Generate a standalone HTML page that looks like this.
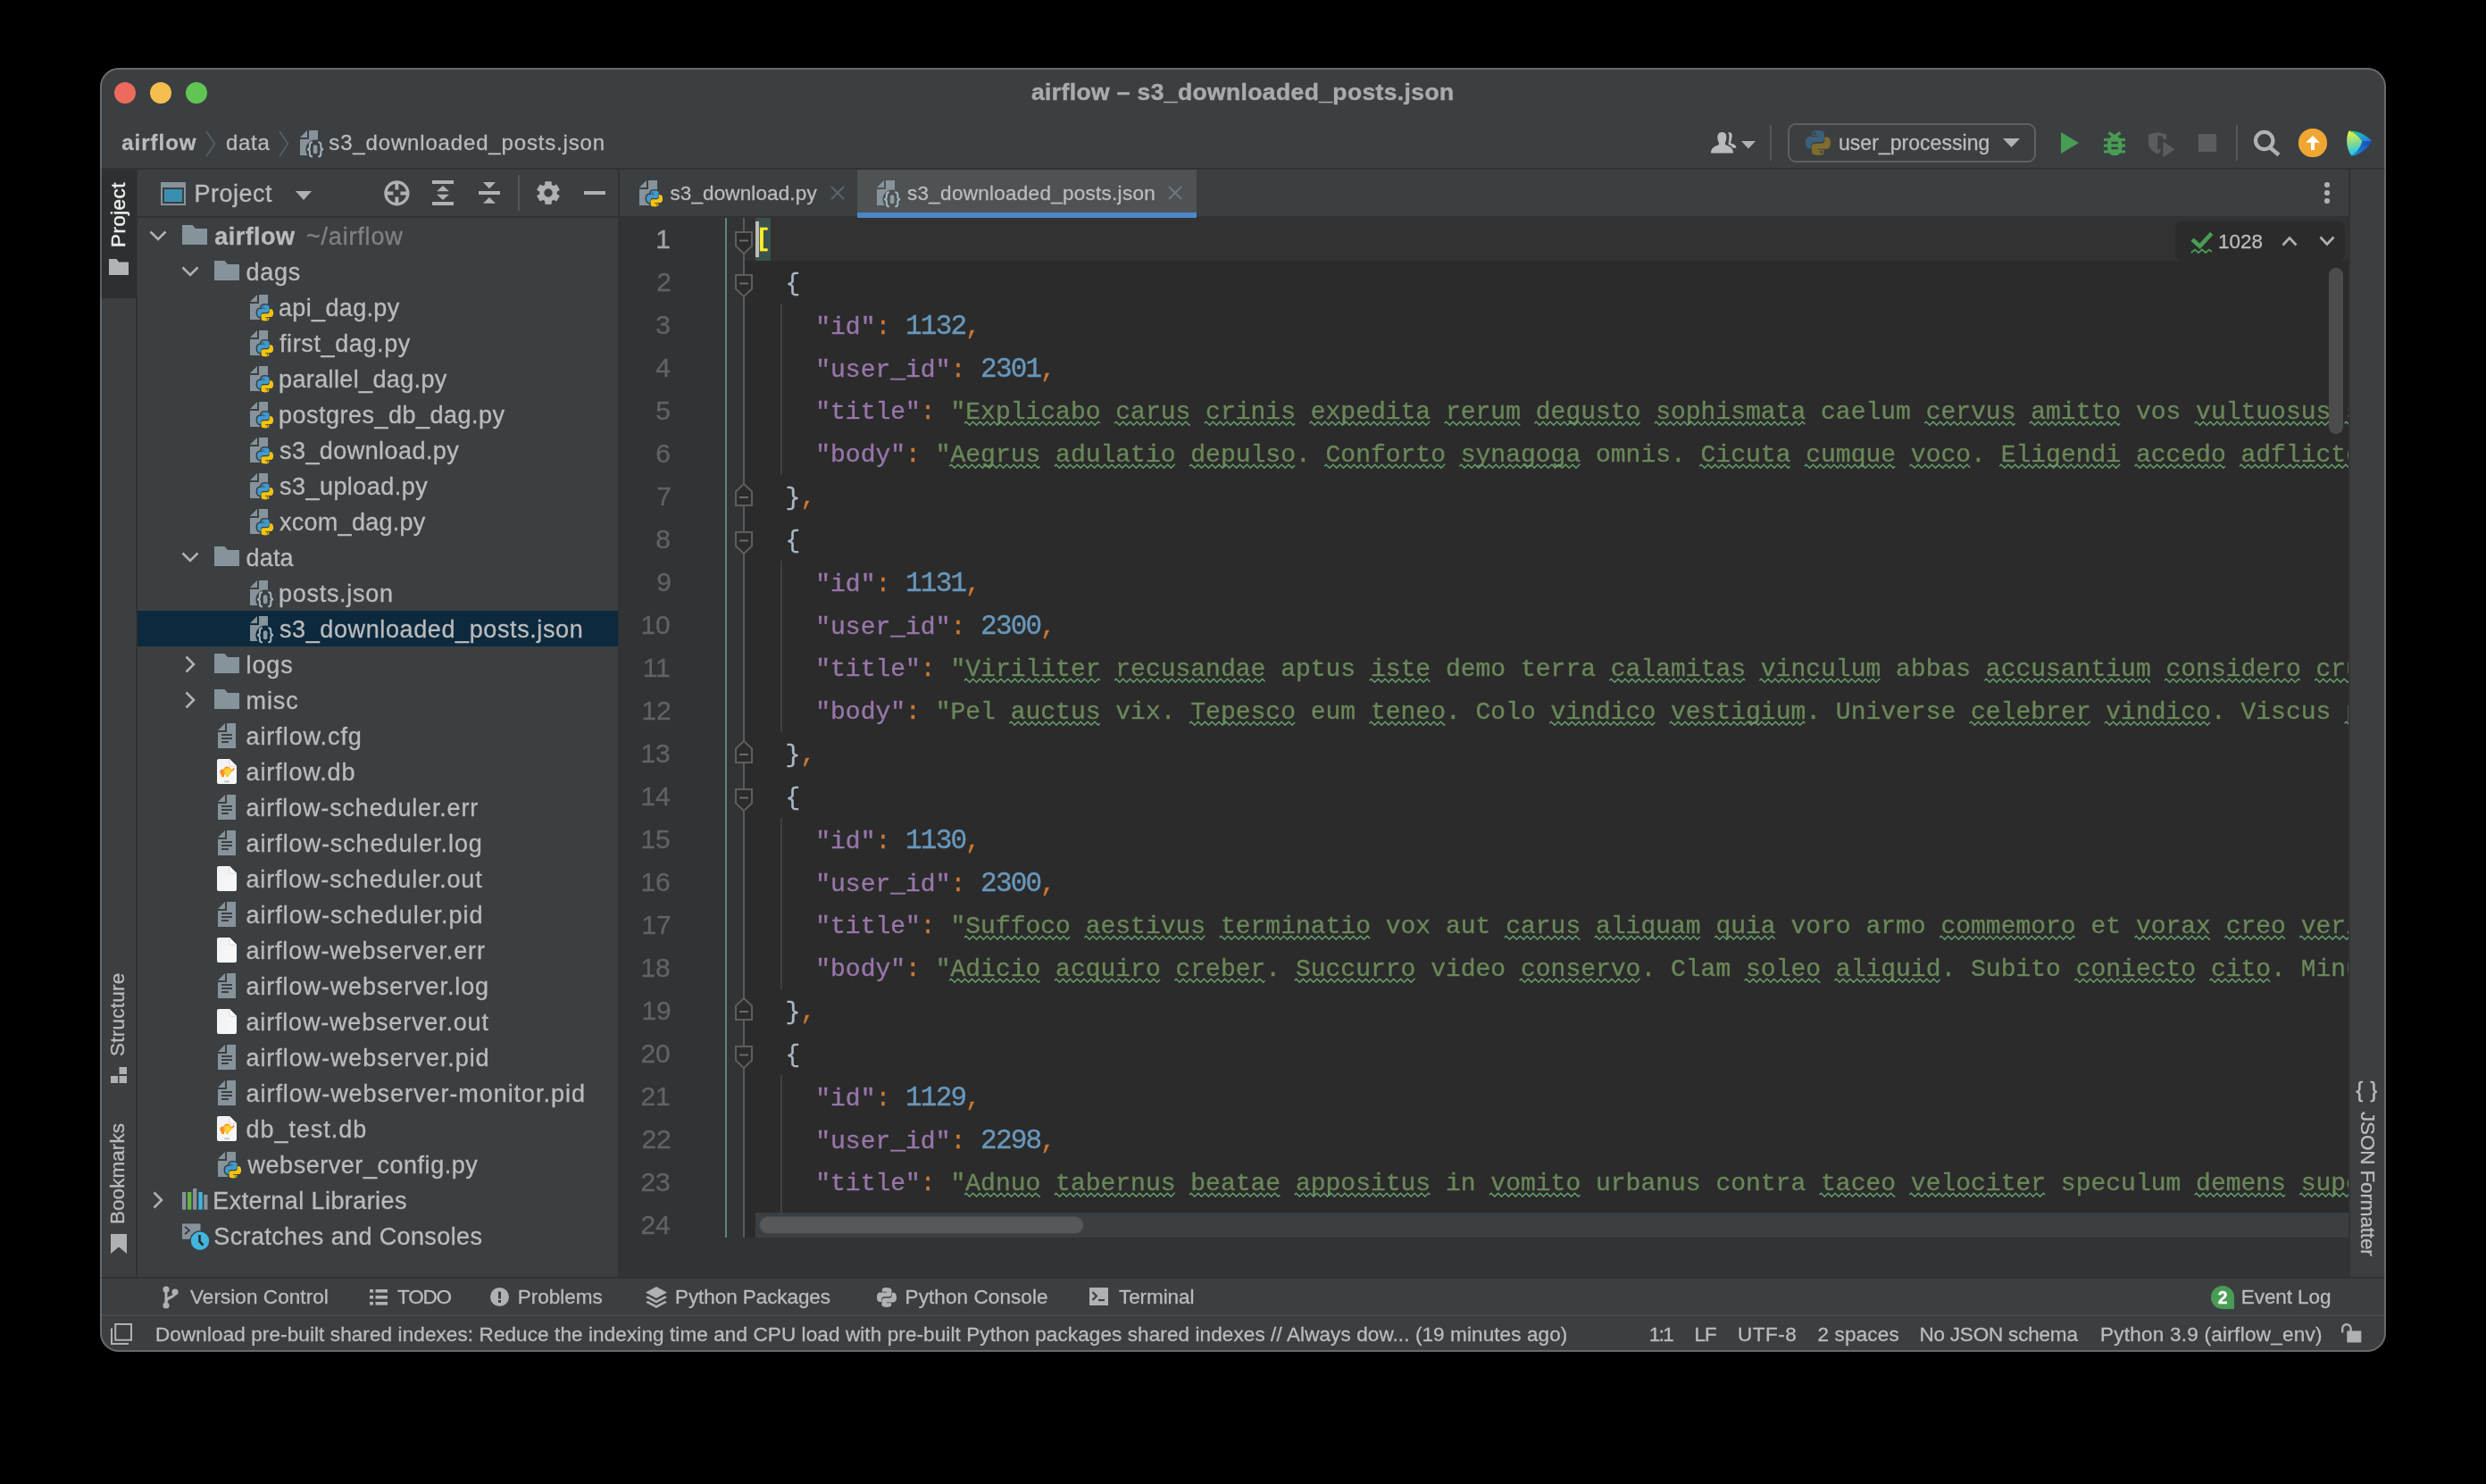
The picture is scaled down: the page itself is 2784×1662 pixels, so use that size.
<!DOCTYPE html>
<html><head><meta charset="utf-8"><title>airflow – s3_downloaded_posts.json</title><style>
html,body{margin:0;padding:0;background:#000;}
body{width:2784px;height:1662px;overflow:hidden;position:relative;font-family:"Liberation Sans", sans-serif;}
#w{will-change:transform;position:absolute;left:0;top:0;width:2784px;height:1662px;clip-path:inset(76px 112px 148px 112px round 21px);background:#3c3f41;}
#w>div,#w>svg,#w>span,#w>pre{position:absolute;}
.t{line-height:1;white-space:pre;}
#bd{position:absolute;left:112px;top:76px;width:2560px;height:1438px;border-radius:21px;box-sizing:border-box;border:2px solid rgba(140,140,140,.55);pointer-events:none;}

.code{position:absolute;left:846px;font-family:"Liberation Mono",monospace;font-size:28px;line-height:48px;height:48px;white-space:pre;margin:0;color:#a9b7c6;-webkit-text-stroke:0.35px currentColor;}
.t{-webkit-text-stroke:0.3px currentColor}
.k{color:#9876aa}.p{color:#cc7832}.n{color:#6897bb;font-size:31px;letter-spacing:-1.8px}.s{color:#6a8759}


</style></head><body>
<svg width="0" height="0" style="position:absolute"><defs>
<symbol id="folder" viewBox="0 0 28 22"><path d="M0,0H11.5L15,4H28V22H0Z" fill="#87939a"/></symbol>
<symbol id="page" viewBox="0 0 20 28"><path d="M10,0H20V28H0V10H10Z" fill="#87939a"/><path d="M0,8L8,0V8Z" fill="#87939a"/></symbol>
<symbol id="pyfile" viewBox="0 0 28 32"><mask id="mpy" maskUnits="userSpaceOnUse" x="0" y="0" width="28" height="32"><rect width="28" height="32" fill="#fff"/><g transform="translate(8.1,11.6) scale(.9)" stroke="#000" stroke-width="3.6" stroke-linejoin="round" fill="#000"><path d="M9.9,0C5,0 5.3,2.1 5.3,2.1V4.3H10V5H3.4C3.4,5 0,4.6 0,9.7C0,14.8 3,14.6 3,14.6H4.7V12.2C4.7,12.2 4.6,9.3 7.6,9.3H12.3C12.3,9.3 15,9.35 15,6.6V2.7C15,2.7 15.4,0 9.9,0Z"/><path d="M10.1,19.9C15,19.9 14.7,17.8 14.7,17.8V15.6H10V14.9H16.6C16.6,14.9 20,15.3 20,10.2C20,5.1 17,5.3 17,5.3H15.3V7.7C15.3,7.7 15.4,10.6 12.4,10.6H7.7C7.7,10.6 5,10.55 5,13.3V17.2C5,17.2 4.6,19.9 10.1,19.9Z"/></g></mask><g mask="url(#mpy)"><use href="#page" x="0" y="0" width="20" height="28"/></g><g transform="translate(8.1,11.6) scale(.9)"><path d="M9.9,0C5,0 5.3,2.1 5.3,2.1V4.3H10V5H3.4C3.4,5 0,4.6 0,9.7C0,14.8 3,14.6 3,14.6H4.7V12.2C4.7,12.2 4.6,9.3 7.6,9.3H12.3C12.3,9.3 15,9.35 15,6.6V2.7C15,2.7 15.4,0 9.9,0Z" fill="#409ace"/><path d="M10.1,19.9C15,19.9 14.7,17.8 14.7,17.8V15.6H10V14.9H16.6C16.6,14.9 20,15.3 20,10.2C20,5.1 17,5.3 17,5.3H15.3V7.7C15.3,7.7 15.4,10.6 12.4,10.6H7.7C7.7,10.6 5,10.55 5,13.3V17.2C5,17.2 4.6,19.9 10.1,19.9Z" fill="#f2c30f"/><circle cx="7.3" cy="2.5" r="1" fill="#2d5f80"/><circle cx="12.7" cy="17.4" r="1" fill="#7d640a"/></g></symbol>
<symbol id="jsonfile" viewBox="0 0 28 32"><mask id="mjs" maskUnits="userSpaceOnUse" x="0" y="0" width="28" height="32"><rect width="28" height="32" fill="#fff"/><circle cx="17.1" cy="21.2" r="10.700" fill="#000"/></mask><g mask="url(#mjs)"><use href="#page" x="0" y="0" width="20" height="28"/></g>
 <g fill="none" stroke="#a4b4bf" stroke-width="2"><path d="M13.900,13.300C11.300,13.300 10.900,14.300 10.900,16.200V18.600C10.900,20.200 10.200,21.100 8.200,21.300C10.200,21.500 10.900,22.400 10.900,24V26.400C10.900,28.300 11.300,29.300 13.900,29.300"/><path d="M20.300,13.300C22.900,13.300 23.300,14.300 23.300,16.200V18.600C23.300,20.200 24,21.100 26,21.300C24,21.500 23.300,22.400 23.300,24V26.400C23.300,28.300 22.900,29.300 20.300,29.300"/></g><rect x="14.800" y="16.300" width="4.600" height="10" rx="2" fill="#8c9aa3"/></symbol>
<symbol id="txtfile" viewBox="0 0 20 28"><use href="#page" width="20" height="28"/><g fill="#3c3f41"><rect x="4" y="12" width="12" height="2"/><rect x="4" y="16" width="12" height="2"/><rect x="4" y="20" width="8" height="2"/></g></symbol>
<symbol id="blank" viewBox="0 0 22 28"><defs><linearGradient id="gbl" x1="0" y1="0" x2="1" y2="1"><stop offset="0" stop-color="#f1f1f1"/><stop offset="1" stop-color="#f8f8f8"/></linearGradient></defs><path d="M2,0H14L22,8V26Q22,28 20,28H2Q0,28 0,26V2Q0,0 2,0Z" fill="url(#gbl)"/><path d="M14,0L22,8H15.500Q14,8 14,6.500Z" fill="#fdfdfd"/><path d="M13.800,0.500V6.500Q13.800,8.200 15.500,8.200H21.500" fill="none" stroke="#c9c9c9" stroke-width="0.700"/></symbol>
<symbol id="dbfile" viewBox="0 0 22 28"><defs><radialGradient id="gel" cx="0.550" cy="0.600" r="0.700"><stop offset="0" stop-color="#ffe03a"/><stop offset="0.600" stop-color="#fdc02c"/><stop offset="1" stop-color="#f9962a"/></radialGradient></defs><use href="#blank" width="22" height="28"/><path d="M15.300,12.300C16.800,13.500 18,12.600 18.800,10.900" fill="none" stroke="#f98d22" stroke-width="1.700" stroke-linecap="round"/><rect x="4.900" y="16.500" width="3.200" height="3.800" rx="1.400" fill="#fa8a1e"/><rect x="10" y="16.500" width="3.200" height="3.800" rx="1.400" fill="#fdc92f"/><circle cx="6.600" cy="14.800" r="3.300" fill="#f98f22"/><circle cx="7.500" cy="13.500" r="1.200" fill="#f2622a"/><ellipse cx="11.700" cy="13.300" rx="4.700" ry="4.500" fill="url(#gel)"/><path d="M8.300,10.300C9.500,8.600 12,8.300 13.500,9.200C11.500,9.200 9.800,9.800 8.300,10.300Z" fill="#f2622a"/><rect x="8.200" y="24" width="5.800" height="2.600" rx="0.500" fill="#cfcfcf"/></symbol>
<symbol id="chev-d" viewBox="0 0 20 12"><path d="M1.5,1.5L10,10L18.5,1.5" fill="none" stroke="#afb1b3" stroke-width="2.6"/></symbol>
<symbol id="chev-r" viewBox="0 0 12 20"><path d="M1.5,1.5L10,10L1.5,18.5" fill="none" stroke="#afb1b3" stroke-width="2.6"/></symbol>
<symbol id="fold-open" viewBox="0 0 20 26"><path d="M1,1H19V16.5L10,25L1,16.5Z" fill="#2b2b2b" stroke="#5e5e5e" stroke-width="2"/><rect x="5" y="9.5" width="10" height="2" fill="#6a6a6a"/></symbol>
<symbol id="fold-close" viewBox="0 0 20 26"><path d="M1,25H19V9.5L10,1L1,9.5Z" fill="#2b2b2b" stroke="#5e5e5e" stroke-width="2"/><rect x="5" y="15" width="10" height="2" fill="#6a6a6a"/></symbol>
</defs></svg>
<div id="w">
<div style="left:128px;top:92px;width:24px;height:24px;background:#ec6a5e;border-radius:50%"></div>
<div style="left:168px;top:92px;width:24px;height:24px;background:#f4bf4f;border-radius:50%"></div>
<div style="left:208px;top:92px;width:24px;height:24px;background:#61c554;border-radius:50%"></div>
<svg style="left:229.5px;top:146px;" width="12" height="30" viewBox="0 0 12 30"><path d="M1,1L10.5,15L1,29" fill="none" stroke="#5a6064" stroke-width="1.6"/></svg>
<svg style="left:311.5px;top:146px;" width="12" height="30" viewBox="0 0 12 30"><path d="M1,1L10.5,15L1,29" fill="none" stroke="#5a6064" stroke-width="1.6"/></svg>
<svg style="left:336px;top:146px;" width="28" height="32" viewBox="0 0 28 32"><use href="#jsonfile" width="28" height="32"/></svg>
<div style="left:112px;top:188px;width:2560px;height:2px;background:#323232;"></div>
<div style="left:112px;top:190px;width:40px;height:1240px;background:#3c3f41;"></div>
<div style="left:112px;top:190px;width:40px;height:144px;background:#2d2f30;"></div>
<div style="left:152px;top:190px;width:2px;height:1240px;background:#323232;"></div>
<span class="t" id="v10" style="left:133px;top:277px;font-size:22.5px;color:#ececec;-webkit-text-stroke:0.45px #ececec;transform-origin:0 0;transform:rotate(-90deg) translateY(-50%);letter-spacing:0.4px">Project</span>
<span class="t" id="v11" style="left:132px;top:1183px;font-size:22.5px;color:#bbbbbb;transform-origin:0 0;transform:rotate(-90deg) translateY(-50%);letter-spacing:0.25px">Structure</span>
<span class="t" id="v12" style="left:132px;top:1370.5px;font-size:22.5px;color:#bbbbbb;transform-origin:0 0;transform:rotate(-90deg) translateY(-50%);letter-spacing:0.05px">Bookmarks</span>
<svg style="left:122px;top:290px;" width="22" height="18" viewBox="0 0 22 18"><path d="M0,0H8.5L11,3.500H22V18H0Z" fill="#b2b3b4"/></svg>
<svg style="left:124px;top:1195px;" width="18" height="18" viewBox="0 0 18 18"><rect x="9.5" y="0" width="8.5" height="8" fill="#afb1b3"/><rect x="0" y="10" width="8" height="8" fill="#afb1b3"/><rect x="9.5" y="10" width="8.5" height="8" fill="#afb1b3"/></svg>
<svg style="left:124px;top:1382px;" width="18" height="22" viewBox="0 0 18 22"><path d="M0,0H18V22L9,14.5L0,22Z" fill="#afb1b3"/></svg>
<div style="left:154px;top:242px;width:538px;height:2px;background:#323232;"></div>
<div style="left:692px;top:190px;width:2px;height:1240px;background:#323232;"></div>
<svg style="left:180px;top:204px;" width="28" height="26" viewBox="0 0 28 26"><rect x="0" y="0" width="28" height="26" fill="#87939a"/><rect x="2" y="6" width="24" height="18" fill="#3c3f41"/><rect x="4" y="8" width="20" height="14" fill="#3a8fb0"/></svg>
<svg style="left:331px;top:213.5px;" width="18" height="10" viewBox="0 0 18 10"><path d="M0,0H18L9,10Z" fill="#afb1b3"/></svg>
<svg style="left:429.5px;top:201.5px;" width="29" height="29" viewBox="0 0 29 29"><circle cx="14.400" cy="14.400" r="12.400" fill="none" stroke="#afb1b3" stroke-width="3.400"/><path d="M14.400,2V10.400M14.400,18.400V27M2,14.400H10.400M18.400,14.400H27" stroke="#afb1b3" stroke-width="4"/></svg>
<svg style="left:484px;top:202px;" width="24.2" height="28" viewBox="0 0 24.2 28"><rect x="0" y="0" width="24.200" height="4" fill="#afb1b3"/><rect x="0" y="24" width="24.200" height="4" fill="#afb1b3"/><path d="M12,6L19,12.200H5Z M12,22L19,15.800H5Z" fill="#afb1b3"/></svg>
<svg style="left:536px;top:203px;" width="24.2" height="26" viewBox="0 0 24.2 26"><rect x="0" y="11" width="24.200" height="4" fill="#afb1b3"/><path d="M12,8.200L19,1H5Z M12,18L19,24.800H5Z" fill="#afb1b3"/></svg>
<div style="left:580px;top:196px;width:2px;height:40px;background:#555759;"></div>
<svg style="left:600px;top:202px;" width="28" height="28" viewBox="0 0 28 28"><path d="M10.94,1.78L17.06,1.78L17.24,5.39L19.84,6.89L23.06,5.24L26.11,10.53L23.08,12.50L23.08,15.50L26.11,17.47L23.06,22.76L19.84,21.11L17.24,22.61L17.06,26.22L10.94,26.22L10.76,22.61L8.16,21.11L4.94,22.76L1.89,17.47L4.92,15.50L4.92,12.50L1.89,10.53L4.94,5.24L8.16,6.89L10.76,5.39ZM19.3,14A5.3,5.3 0 1,0 8.7,14A5.3,5.3 0 1,0 19.3,14Z" fill="#afb1b3" fill-rule="evenodd" stroke="#afb1b3" stroke-width="1.2" stroke-linejoin="round"/></svg>
<div style="left:653.8px;top:214px;width:24.4px;height:4px;background:#afb1b3;"></div>
<svg style="left:167px;top:257.5px;" width="20" height="12" viewBox="0 0 20 12"><use href="#chev-d" width="20" height="12"/></svg>
<svg style="left:204px;top:252px;" width="28" height="22" viewBox="0 0 28 22"><use href="#folder" width="28" height="22"/></svg>
<svg style="left:203px;top:297.5px;" width="20" height="12" viewBox="0 0 20 12"><use href="#chev-d" width="20" height="12"/></svg>
<svg style="left:240px;top:292px;" width="28" height="22" viewBox="0 0 28 22"><use href="#folder" width="28" height="22"/></svg>
<svg style="left:280px;top:330px;" width="28" height="32" viewBox="0 0 28 32"><use href="#pyfile" width="28" height="32"/></svg>
<svg style="left:280px;top:370px;" width="28" height="32" viewBox="0 0 28 32"><use href="#pyfile" width="28" height="32"/></svg>
<svg style="left:280px;top:410px;" width="28" height="32" viewBox="0 0 28 32"><use href="#pyfile" width="28" height="32"/></svg>
<svg style="left:280px;top:450px;" width="28" height="32" viewBox="0 0 28 32"><use href="#pyfile" width="28" height="32"/></svg>
<svg style="left:280px;top:490px;" width="28" height="32" viewBox="0 0 28 32"><use href="#pyfile" width="28" height="32"/></svg>
<svg style="left:280px;top:530px;" width="28" height="32" viewBox="0 0 28 32"><use href="#pyfile" width="28" height="32"/></svg>
<svg style="left:280px;top:570px;" width="28" height="32" viewBox="0 0 28 32"><use href="#pyfile" width="28" height="32"/></svg>
<svg style="left:203px;top:617.5px;" width="20" height="12" viewBox="0 0 20 12"><use href="#chev-d" width="20" height="12"/></svg>
<svg style="left:240px;top:612px;" width="28" height="22" viewBox="0 0 28 22"><use href="#folder" width="28" height="22"/></svg>
<svg style="left:280px;top:650px;" width="28" height="32" viewBox="0 0 28 32"><use href="#jsonfile" width="28" height="32"/></svg>
<div style="left:154px;top:684px;width:538px;height:40px;background:#0d293e;"></div>
<svg style="left:280px;top:690px;" width="28" height="32" viewBox="0 0 28 32"><use href="#jsonfile" width="28" height="32"/></svg>
<svg style="left:206.5px;top:734px;" width="12" height="20" viewBox="0 0 12 20"><use href="#chev-r" width="12" height="20"/></svg>
<svg style="left:240px;top:732px;" width="28" height="22" viewBox="0 0 28 22"><use href="#folder" width="28" height="22"/></svg>
<svg style="left:206.5px;top:774px;" width="12" height="20" viewBox="0 0 12 20"><use href="#chev-r" width="12" height="20"/></svg>
<svg style="left:240px;top:772px;" width="28" height="22" viewBox="0 0 28 22"><use href="#folder" width="28" height="22"/></svg>
<svg style="left:244px;top:810px;" width="20" height="28" viewBox="0 0 20 28"><use href="#txtfile" width="20" height="28"/></svg>
<svg style="left:243px;top:850px;" width="22" height="28" viewBox="0 0 22 28"><use href="#dbfile" width="22" height="28"/></svg>
<svg style="left:244px;top:890px;" width="20" height="28" viewBox="0 0 20 28"><use href="#txtfile" width="20" height="28"/></svg>
<svg style="left:244px;top:930px;" width="20" height="28" viewBox="0 0 20 28"><use href="#txtfile" width="20" height="28"/></svg>
<svg style="left:243px;top:970px;" width="22" height="28" viewBox="0 0 22 28"><use href="#blank" width="22" height="28"/></svg>
<svg style="left:244px;top:1010px;" width="20" height="28" viewBox="0 0 20 28"><use href="#txtfile" width="20" height="28"/></svg>
<svg style="left:243px;top:1050px;" width="22" height="28" viewBox="0 0 22 28"><use href="#blank" width="22" height="28"/></svg>
<svg style="left:244px;top:1090px;" width="20" height="28" viewBox="0 0 20 28"><use href="#txtfile" width="20" height="28"/></svg>
<svg style="left:243px;top:1130px;" width="22" height="28" viewBox="0 0 22 28"><use href="#blank" width="22" height="28"/></svg>
<svg style="left:244px;top:1170px;" width="20" height="28" viewBox="0 0 20 28"><use href="#txtfile" width="20" height="28"/></svg>
<svg style="left:244px;top:1210px;" width="20" height="28" viewBox="0 0 20 28"><use href="#txtfile" width="20" height="28"/></svg>
<svg style="left:243px;top:1250px;" width="22" height="28" viewBox="0 0 22 28"><use href="#dbfile" width="22" height="28"/></svg>
<svg style="left:244px;top:1290px;" width="28" height="32" viewBox="0 0 28 32"><use href="#pyfile" width="28" height="32"/></svg>
<svg style="left:170.5px;top:1334px;" width="12" height="20" viewBox="0 0 12 20"><use href="#chev-r" width="12" height="20"/></svg>
<svg style="left:204px;top:1330.5px;" width="29" height="24" viewBox="0 0 29 24"><rect x="0" y="4" width="4.300" height="19.700" fill="#87939a"/><rect x="6" y="4" width="4.300" height="19.700" fill="#62b543"/><rect x="12" y="0" width="4.300" height="23.700" fill="#87939a"/><rect x="18.400" y="4" width="4.300" height="19.700" fill="#40b6e0"/><rect x="24.300" y="7" width="4.200" height="16.700" fill="#87939a"/></svg>
<svg style="left:204px;top:1369px;" width="32" height="32" viewBox="0 0 32 32"><path d="M0,1.400H20.500V9A11.800,11.800 0 0,0 8.500,18.800H0Z" fill="#87939a"/><path d="M3,4.800L8,9L3,13.200" fill="none" stroke="#3c3f41" stroke-width="2"/><circle cx="20" cy="20.800" r="10.200" fill="#40b6e0"/><path d="M19.500,14V21.500L23.500,25.500" fill="none" stroke="#2b2b2b" stroke-width="2.600"/></svg>
<svg style="left:1915.8px;top:147.7px;" width="29" height="24" viewBox="0 0 29 24"><path d="M21,0.300C24.300,0.300 24,5 23,8.500C22.500,10.500 21.800,11.500 22.300,12.300C24,13.500 28.400,13.500 28.400,17.800H24.500C23.500,15.500 21,14.500 19.300,13.800C19.800,11 20.800,7 20.300,3.500C20.100,2 19.600,1 19,0.600C19.600,0.400 20.300,0.300 21,0.300Z" fill="#b9babb"/><path d="M12.400,0C17.500,0 18,4.500 17,9C16.500,11.500 15.500,12.500 16,13.800C18,15.500 25,15.800 25,23.400H0C0,15.800 7.500,15.500 9,13.800C9.500,12.500 8.300,11.500 7.800,9C6.800,4.500 7.400,0 12.400,0Z" fill="#b9babb" stroke="#3c3f41" stroke-width="0"/></svg>
<svg style="left:1950px;top:157.7px;" width="16" height="8.5" viewBox="0 0 16 8.5"><path d="M0,0H16L8,8.500Z" fill="#afb1b3"/></svg>
<div style="left:1982px;top:140px;width:2px;height:40px;background:#555759;"></div>
<div style="left:2002px;top:138px;width:278px;height:44px;background:transparent;border:2.300px solid #5e6163;border-radius:9px;box-sizing:border-box"></div>
<svg style="left:2022px;top:146px;" width="28" height="28" viewBox="0 0 20 20"><path d="M9.9,0C5,0 5.3,2.1 5.3,2.1V4.3H10V5H3.4C3.4,5 0,4.6 0,9.7C0,14.8 3,14.6 3,14.6H4.7V12.2C4.7,12.2 4.6,9.3 7.6,9.3H12.3C12.3,9.3 15,9.35 15,6.6V2.7C15,2.7 15.4,0 9.9,0Z" fill="#3b6079"/><path d="M10.1,19.9C15,19.9 14.7,17.8 14.7,17.8V15.6H10V14.9H16.6C16.6,14.9 20,15.3 20,10.2C20,5.1 17,5.3 17,5.3H15.3V7.7C15.3,7.7 15.4,10.6 12.4,10.6H7.7C7.7,10.6 5,10.55 5,13.3V17.2C5,17.2 4.6,19.9 10.1,19.9Z" fill="#7d6d2f"/><circle cx="7.300" cy="2.500" r="1" fill="#3c3f41"/><circle cx="12.700" cy="17.400" r="1" fill="#3c3f41"/></svg>
<svg style="left:2243px;top:155px;" width="19" height="10" viewBox="0 0 19 10"><path d="M0,0H19L9.500,10Z" fill="#afb1b3"/></svg>
<svg style="left:2308px;top:148px;" width="20" height="24" viewBox="0 0 20 24"><path d="M0,0L20,12L0,24Z" fill="#499c54"/></svg>
<svg style="left:2356px;top:145.5px;" width="24.4" height="28.6" viewBox="0 0 24.4 28.6"><g fill="#499c54"><path d="M5.500,2.500L11.800,7.200L18.500,2.500" fill="none" stroke="#499c54" stroke-width="3.400"/><ellipse cx="12.200" cy="17.300" rx="8.500" ry="11.300"/><rect x="0" y="8.900" width="24.400" height="3"/><rect x="0" y="15.600" width="24.400" height="3"/><rect x="0" y="22.400" width="24.400" height="3"/></g><rect x="8.400" y="12.700" width="7.500" height="2.500" fill="#3c3f41"/><rect x="8.400" y="18.700" width="7.500" height="2.500" fill="#3c3f41"/></svg>
<svg style="left:2405.8px;top:147.5px;" width="30" height="29" viewBox="0 0 30 29"><path d="M0,2.600L10,0L20.200,2.600V8H16V4.800L10.300,4V20.500L13.500,17.500V22C12.500,23 11.300,23.700 10,24.300C4,21.500 0,17.500 0,11.500Z" fill="#5a5c5e"/><path d="M16.300,10.500L29.500,19.200L16.300,28Z" fill="#5a5c5e"/></svg>
<div style="left:2462px;top:150px;width:20px;height:20px;background:#5a5c5e;"></div>
<div style="left:2504px;top:140px;width:2px;height:40px;background:#555759;"></div>
<svg style="left:2522px;top:144px;" width="32" height="32" viewBox="0 0 32 32"><circle cx="13.700" cy="13.500" r="9.700" fill="none" stroke="#afb1b3" stroke-width="4.200"/><path d="M20.200,21.200L30,29.500" stroke="#afb1b3" stroke-width="4.400"/></svg>
<svg style="left:2574px;top:144px;" width="32" height="32" viewBox="0 0 32 32"><circle cx="16" cy="16" r="16.100" fill="#f0a732"/><path d="M16,8L23.800,15.700H18V24H14V15.700H8.200Z" fill="#fff"/></svg>
<svg style="left:2627.8px;top:145.6px;" width="29" height="29" viewBox="0 0 29 29"><defs><linearGradient id="ga" x1="0" y1="0" x2="0.150" y2="1"><stop offset="0" stop-color="#f8f53a"/><stop offset=".5" stop-color="#8fdb8a"/><stop offset="1" stop-color="#1fc3f0"/></linearGradient><linearGradient id="gb" x1="0" y1="0" x2="1" y2="0.600"><stop offset="0" stop-color="#2bd17a"/><stop offset=".5" stop-color="#22b3b8"/><stop offset="1" stop-color="#1b86e8"/></linearGradient><linearGradient id="gc" x1="1" y1="0" x2="0" y2="1"><stop offset="0" stop-color="#1d49b0"/><stop offset=".6" stop-color="#1673d3"/><stop offset="1" stop-color="#0ab0f0"/></linearGradient></defs><path d="M2.500,0.500C-1,8 -1,20 5.400,28.500C12,24 16,18.500 17.400,12.300C14,6.500 9,2.500 2.500,0.500Z" fill="url(#ga)"/><path d="M2.500,0.500C13,0.300 22,5 28.200,12.300H17.400C14,6.500 9,2.500 2.500,0.500Z" fill="url(#gb)"/><path d="M17.400,12.300H28.200C24,20 15,27 5.400,28.500C12,24 16,18.500 17.400,12.300Z" fill="url(#gc)"/></svg>
<div style="left:694px;top:190px;width:1936px;height:52px;background:#3c3f41;"></div>
<div style="left:694px;top:242px;width:1936px;height:2px;background:#323232;"></div>
<svg style="left:716px;top:202px;" width="28" height="32" viewBox="0 0 28 32"><use href="#pyfile" width="28" height="32"/></svg>
<svg style="left:930px;top:208px;" width="16" height="16" viewBox="0 0 16 16"><path d="M1,1L15,15M15,1L1,15" stroke="#5d656a" stroke-width="2"/></svg>
<div style="left:960px;top:190px;width:380px;height:54px;background:#4e5254;"></div>
<div style="left:960px;top:238px;width:380px;height:6px;background:#4a88c7;"></div>
<svg style="left:982px;top:202px;" width="28" height="32" viewBox="0 0 28 32"><use href="#jsonfile" width="28" height="32"/></svg>
<svg style="left:1308px;top:208px;" width="16" height="16" viewBox="0 0 16 16"><path d="M1,1L15,15M15,1L1,15" stroke="#6e767b" stroke-width="2"/></svg>
<div style="left:2603px;top:204.2px;width:5.6px;height:5.6px;background:#afb1b3;border-radius:50%"></div>
<div style="left:2603px;top:213.2px;width:5.6px;height:5.6px;background:#afb1b3;border-radius:50%"></div>
<div style="left:2603px;top:222.2px;width:5.6px;height:5.6px;background:#afb1b3;border-radius:50%"></div>
<div style="left:2630px;top:190px;width:42px;height:1240px;background:#3c3f41;"></div>
<div style="left:2630px;top:190px;width:1.6px;height:1240px;background:#323232;"></div>
<span class="t" style="left:2651px;top:1245px;font-size:22.5px;color:#bbbbbb;transform-origin:0 0;transform:rotate(90deg) translateY(-50%);letter-spacing:-0.15px">JSON Formatter</span>
<div style="left:694px;top:244px;width:1936px;height:1142px;background:#2b2b2b;"></div>
<div style="left:694px;top:244px;width:140px;height:1186px;background:#313335;"></div>
<div style="left:834px;top:244px;width:1796px;height:48px;background:#323232;"></div>
<div style="left:694px;top:1386px;width:1936px;height:44px;background:#313335;"></div>
<div style="left:812px;top:244px;width:2px;height:1142px;background:#57877b;"></div>
<div style="left:832px;top:244px;width:2px;height:1142px;background:#5b5b5b;"></div>
<div style="left:874.3px;top:340px;width:1.6px;height:192px;background:#414141;"></div>
<div style="left:874.3px;top:628px;width:1.6px;height:192px;background:#414141;"></div>
<div style="left:874.3px;top:916px;width:1.6px;height:192px;background:#414141;"></div>
<div style="left:874.3px;top:1204px;width:1.6px;height:154px;background:#414141;"></div>
<svg style="left:823px;top:259px;" width="20" height="26" viewBox="0 0 20 26"><use href="#fold-open" width="20" height="26"/></svg>
<svg style="left:823px;top:307px;" width="20" height="26" viewBox="0 0 20 26"><use href="#fold-open" width="20" height="26"/></svg>
<svg style="left:823px;top:595px;" width="20" height="26" viewBox="0 0 20 26"><use href="#fold-open" width="20" height="26"/></svg>
<svg style="left:823px;top:883px;" width="20" height="26" viewBox="0 0 20 26"><use href="#fold-open" width="20" height="26"/></svg>
<svg style="left:823px;top:1171px;" width="20" height="26" viewBox="0 0 20 26"><use href="#fold-open" width="20" height="26"/></svg>
<svg style="left:823px;top:541px;" width="20" height="26" viewBox="0 0 20 26"><use href="#fold-close" width="20" height="26"/></svg>
<svg style="left:823px;top:829px;" width="20" height="26" viewBox="0 0 20 26"><use href="#fold-close" width="20" height="26"/></svg>
<svg style="left:823px;top:1117px;" width="20" height="26" viewBox="0 0 20 26"><use href="#fold-close" width="20" height="26"/></svg>
<div style="left:846px;top:244px;width:16.8px;height:48px;background:#3b514d;"></div>
<div style="left:846px;top:248px;width:4px;height:40px;background:#bbbbbb;"></div>
<div style="left:0;top:0;width:2630px;height:1386px;overflow:hidden"><pre class="code" style="top:246.3px"><b style="color:#ffef28;position:relative;top:-2.5px">[</b></pre><pre class="code" style="top:294.3px">  {</pre><pre class="code" style="top:342.3px">    <span class="k">&quot;id&quot;</span><span class="p">:</span> <span class="n">1132</span><span class="p">,</span></pre><pre class="code" style="top:390.3px">    <span class="k">&quot;user_id&quot;</span><span class="p">:</span> <span class="n">2301</span><span class="p">,</span></pre><pre class="code" style="top:438.3px">    <span class="k">&quot;title&quot;</span><span class="p">:</span> <span class="s">&quot;Explicabo carus crinis expedita rerum degusto sophismata caelum cervus amitto vos vultuosus succurro vox</span></pre><pre class="code" style="top:486.3px">    <span class="k">&quot;body&quot;</span><span class="p">:</span> <span class="s">&quot;Aegrus adulatio depulso. Conforto synagoga omnis. Cicuta cumque voco. Eligendi accedo adflicto. Vox</span></pre><pre class="code" style="top:534.3px">  }<span class="p">,</span></pre><pre class="code" style="top:582.3px">  {</pre><pre class="code" style="top:630.3px">    <span class="k">&quot;id&quot;</span><span class="p">:</span> <span class="n">1131</span><span class="p">,</span></pre><pre class="code" style="top:678.3px">    <span class="k">&quot;user_id&quot;</span><span class="p">:</span> <span class="n">2300</span><span class="p">,</span></pre><pre class="code" style="top:726.3px">    <span class="k">&quot;title&quot;</span><span class="p">:</span> <span class="s">&quot;Viriliter recusandae aptus iste demo terra calamitas vinculum abbas accusantium considero crux vox</span></pre><pre class="code" style="top:774.3px">    <span class="k">&quot;body&quot;</span><span class="p">:</span> <span class="s">&quot;Pel auctus vix. Tepesco eum teneo. Colo vindico vestigium. Universe celebrer vindico. Viscus pecto vox</span></pre><pre class="code" style="top:822.3px">  }<span class="p">,</span></pre><pre class="code" style="top:870.3px">  {</pre><pre class="code" style="top:918.3px">    <span class="k">&quot;id&quot;</span><span class="p">:</span> <span class="n">1130</span><span class="p">,</span></pre><pre class="code" style="top:966.3px">    <span class="k">&quot;user_id&quot;</span><span class="p">:</span> <span class="n">2300</span><span class="p">,</span></pre><pre class="code" style="top:1014.3px">    <span class="k">&quot;title&quot;</span><span class="p">:</span> <span class="s">&quot;Suffoco aestivus terminatio vox aut carus aliquam quia voro armo commemoro et vorax creo veritas vox</span></pre><pre class="code" style="top:1062.3px">    <span class="k">&quot;body&quot;</span><span class="p">:</span> <span class="s">&quot;Adicio acquiro creber. Succurro video conservo. Clam soleo aliquid. Subito coniecto cito. Minus vox</span></pre><pre class="code" style="top:1110.3px">  }<span class="p">,</span></pre><pre class="code" style="top:1158.3px">  {</pre><pre class="code" style="top:1206.3px">    <span class="k">&quot;id&quot;</span><span class="p">:</span> <span class="n">1129</span><span class="p">,</span></pre><pre class="code" style="top:1254.3px">    <span class="k">&quot;user_id&quot;</span><span class="p">:</span> <span class="n">2298</span><span class="p">,</span></pre><pre class="code" style="top:1302.3px">    <span class="k">&quot;title&quot;</span><span class="p">:</span> <span class="s">&quot;Adnuo tabernus beatae appositus in vomito urbanus contra taceo velociter speculum demens supellex vox</span></pre><svg style="position:absolute;left:0;top:0" width="2630" height="1386"><path d="M1080.0,474.2L1081.9,472.3L1085.8,476.1L1089.7,472.3L1093.6,476.1L1097.5,472.3L1101.4,476.1L1105.3,472.3L1109.2,476.1L1113.1,472.3L1117.0,476.1L1120.9,472.3L1124.8,476.1L1128.7,472.3L1132.6,476.1L1136.5,472.3L1140.4,476.1L1144.3,472.3L1148.2,476.1L1152.1,472.3L1156.0,476.1L1159.9,472.3L1163.8,476.1L1167.7,472.3L1171.6,476.1L1175.5,472.3L1179.4,476.1L1183.3,472.3L1187.2,476.1L1191.1,472.3L1195.0,476.1L1198.9,472.3L1202.8,476.1L1206.7,472.3L1210.6,476.1L1214.5,472.3L1218.4,476.1L1222.3,472.3L1226.2,476.1L1230.1,472.3L1231.8,474.0M1248.0,474.2L1249.9,472.3L1253.8,476.1L1257.7,472.3L1261.6,476.1L1265.5,472.3L1269.4,476.1L1273.3,472.3L1277.2,476.1L1281.1,472.3L1285.0,476.1L1288.9,472.3L1292.8,476.1L1296.7,472.3L1300.6,476.1L1304.5,472.3L1308.4,476.1L1312.3,472.3L1316.2,476.1L1320.1,472.3L1324.0,476.1L1327.9,472.3L1331.8,476.1L1332.6,475.3M1348.8,474.2L1350.7,472.3L1354.6,476.1L1358.5,472.3L1362.4,476.1L1366.3,472.3L1370.2,476.1L1374.1,472.3L1378.0,476.1L1381.9,472.3L1385.8,476.1L1389.7,472.3L1393.6,476.1L1397.5,472.3L1401.4,476.1L1405.3,472.3L1409.2,476.1L1413.1,472.3L1417.0,476.1L1420.9,472.3L1424.8,476.1L1428.7,472.3L1432.6,476.1L1436.5,472.3L1440.4,476.1L1444.3,472.3L1448.2,476.1L1450.2,474.2M1466.4,474.2L1468.3,472.3L1472.2,476.1L1476.1,472.3L1480.0,476.1L1483.9,472.3L1487.8,476.1L1491.7,472.3L1495.6,476.1L1499.5,472.3L1503.4,476.1L1507.3,472.3L1511.2,476.1L1515.1,472.3L1519.0,476.1L1522.9,472.3L1526.8,476.1L1530.7,472.3L1534.6,476.1L1538.5,472.3L1542.4,476.1L1546.3,472.3L1550.2,476.1L1554.1,472.3L1558.0,476.1L1561.9,472.3L1565.8,476.1L1569.7,472.3L1573.6,476.1L1577.5,472.3L1581.4,476.1L1585.3,472.3L1589.2,476.1L1593.1,472.3L1597.0,476.1L1600.9,472.3L1601.4,472.8M1617.6,474.2L1619.5,472.3L1623.4,476.1L1627.3,472.3L1631.2,476.1L1635.1,472.3L1639.0,476.1L1642.9,472.3L1646.8,476.1L1650.7,472.3L1654.6,476.1L1658.5,472.3L1662.4,476.1L1666.3,472.3L1670.2,476.1L1674.1,472.3L1678.0,476.1L1681.9,472.3L1685.8,476.1L1689.7,472.3L1693.6,476.1L1697.5,472.3L1701.4,476.1L1702.2,475.3M1718.4,474.2L1720.3,472.3L1724.2,476.1L1728.1,472.3L1732.0,476.1L1735.9,472.3L1739.8,476.1L1743.7,472.3L1747.6,476.1L1751.5,472.3L1755.4,476.1L1759.3,472.3L1763.2,476.1L1767.1,472.3L1771.0,476.1L1774.9,472.3L1778.8,476.1L1782.7,472.3L1786.6,476.1L1790.5,472.3L1794.4,476.1L1798.3,472.3L1802.2,476.1L1806.1,472.3L1810.0,476.1L1813.9,472.3L1817.8,476.1L1821.7,472.3L1825.6,476.1L1829.5,472.3L1833.4,476.1L1836.6,473.0M1852.8,474.2L1854.7,472.3L1858.6,476.1L1862.5,472.3L1866.4,476.1L1870.3,472.3L1874.2,476.1L1878.1,472.3L1882.0,476.1L1885.9,472.3L1889.8,476.1L1893.7,472.3L1897.6,476.1L1901.5,472.3L1905.4,476.1L1909.3,472.3L1913.2,476.1L1917.1,472.3L1921.0,476.1L1924.9,472.3L1928.8,476.1L1932.7,472.3L1936.6,476.1L1940.5,472.3L1944.4,476.1L1948.3,472.3L1952.2,476.1L1956.1,472.3L1960.0,476.1L1963.9,472.3L1967.8,476.1L1971.7,472.3L1975.6,476.1L1979.5,472.3L1983.4,476.1L1987.3,472.3L1991.2,476.1L1995.1,472.3L1999.0,476.1L2002.9,472.3L2006.8,476.1L2010.7,472.3L2014.6,476.1L2018.5,472.3L2021.4,475.1M2155.2,474.2L2157.1,472.3L2161.0,476.1L2164.9,472.3L2168.8,476.1L2172.7,472.3L2176.6,476.1L2180.5,472.3L2184.4,476.1L2188.3,472.3L2192.2,476.1L2196.1,472.3L2200.0,476.1L2203.9,472.3L2207.8,476.1L2211.7,472.3L2215.6,476.1L2219.5,472.3L2223.4,476.1L2227.3,472.3L2231.2,476.1L2235.1,472.3L2239.0,476.1L2242.9,472.3L2246.8,476.1L2250.7,472.3L2254.6,476.1L2256.6,474.2M2272.8,474.2L2274.7,472.3L2278.6,476.1L2282.5,472.3L2286.4,476.1L2290.3,472.3L2294.2,476.1L2298.1,472.3L2302.0,476.1L2305.9,472.3L2309.8,476.1L2313.7,472.3L2317.6,476.1L2321.5,472.3L2325.4,476.1L2329.3,472.3L2333.2,476.1L2337.1,472.3L2341.0,476.1L2344.9,472.3L2348.8,476.1L2352.7,472.3L2356.6,476.1L2360.5,472.3L2364.4,476.1L2368.3,472.3L2372.2,476.1L2374.2,474.2M2457.6,474.2L2459.5,472.3L2463.4,476.1L2467.3,472.3L2471.2,476.1L2475.1,472.3L2479.0,476.1L2482.9,472.3L2486.8,476.1L2490.7,472.3L2494.6,476.1L2498.5,472.3L2502.4,476.1L2506.3,472.3L2510.2,476.1L2514.1,472.3L2518.0,476.1L2521.9,472.3L2525.8,476.1L2529.7,472.3L2533.6,476.1L2537.5,472.3L2541.4,476.1L2545.3,472.3L2549.2,476.1L2553.1,472.3L2557.0,476.1L2560.9,472.3L2564.8,476.1L2568.7,472.3L2572.6,476.1L2576.5,472.3L2580.4,476.1L2584.3,472.3L2588.2,476.1L2592.1,472.3L2596.0,476.1L2599.9,472.3L2603.8,476.1L2607.7,472.3L2609.4,474.0M2625.6,474.2L2627.5,472.3L2631.4,476.1L2635.3,472.3L2639.2,476.1L2643.1,472.3L2647.0,476.1L2650.9,472.3L2654.8,476.1L2658.7,472.3L2662.6,476.1L2666.5,472.3L2670.4,476.1L2674.3,472.3L2678.2,476.1L2682.1,472.3L2686.0,476.1L2689.9,472.3L2693.8,476.1L2697.7,472.3L2701.6,476.1L2705.5,472.3L2709.4,476.1L2713.3,472.3L2717.2,476.1L2721.1,472.3L2725.0,476.1L2728.9,472.3L2732.8,476.1L2736.7,472.3L2740.6,476.1L2744.5,472.3L2748.4,476.1L2752.3,472.3L2756.2,476.1L2760.1,472.3L2760.6,472.8M1063.2,522.2L1065.1,520.3L1069.0,524.1L1072.9,520.3L1076.8,524.1L1080.7,520.3L1084.6,524.1L1088.5,520.3L1092.4,524.1L1096.3,520.3L1100.2,524.1L1104.1,520.3L1108.0,524.1L1111.9,520.3L1115.8,524.1L1119.7,520.3L1123.6,524.1L1127.5,520.3L1131.4,524.1L1135.3,520.3L1139.2,524.1L1143.1,520.3L1147.0,524.1L1150.9,520.3L1154.8,524.1L1158.7,520.3L1162.6,524.1L1164.6,522.2M1180.8,522.2L1182.7,520.3L1186.6,524.1L1190.5,520.3L1194.4,524.1L1198.3,520.3L1202.2,524.1L1206.1,520.3L1210.0,524.1L1213.9,520.3L1217.8,524.1L1221.7,520.3L1225.6,524.1L1229.5,520.3L1233.4,524.1L1237.3,520.3L1241.2,524.1L1245.1,520.3L1249.0,524.1L1252.9,520.3L1256.8,524.1L1260.7,520.3L1264.6,524.1L1268.5,520.3L1272.4,524.1L1276.3,520.3L1280.2,524.1L1284.1,520.3L1288.0,524.1L1291.9,520.3L1295.8,524.1L1299.7,520.3L1303.6,524.1L1307.5,520.3L1311.4,524.1L1315.3,520.3L1315.8,520.8M1332.0,522.2L1333.9,520.3L1337.8,524.1L1341.7,520.3L1345.6,524.1L1349.5,520.3L1353.4,524.1L1357.3,520.3L1361.2,524.1L1365.1,520.3L1369.0,524.1L1372.9,520.3L1376.8,524.1L1380.7,520.3L1384.6,524.1L1388.5,520.3L1392.4,524.1L1396.3,520.3L1400.2,524.1L1404.1,520.3L1408.0,524.1L1411.9,520.3L1415.8,524.1L1419.7,520.3L1423.6,524.1L1427.5,520.3L1431.4,524.1L1435.3,520.3L1439.2,524.1L1443.1,520.3L1447.0,524.1L1450.2,521.0M1483.2,522.2L1485.1,520.3L1489.0,524.1L1492.9,520.3L1496.8,524.1L1500.7,520.3L1504.6,524.1L1508.5,520.3L1512.4,524.1L1516.3,520.3L1520.2,524.1L1524.1,520.3L1528.0,524.1L1531.9,520.3L1535.8,524.1L1539.7,520.3L1543.6,524.1L1547.5,520.3L1551.4,524.1L1555.3,520.3L1559.2,524.1L1563.1,520.3L1567.0,524.1L1570.9,520.3L1574.8,524.1L1578.7,520.3L1582.6,524.1L1586.5,520.3L1590.4,524.1L1594.3,520.3L1598.2,524.1L1602.1,520.3L1606.0,524.1L1609.9,520.3L1613.8,524.1L1617.7,520.3L1618.2,520.8M1634.4,522.2L1636.3,520.3L1640.2,524.1L1644.1,520.3L1648.0,524.1L1651.9,520.3L1655.8,524.1L1659.7,520.3L1663.6,524.1L1667.5,520.3L1671.4,524.1L1675.3,520.3L1679.2,524.1L1683.1,520.3L1687.0,524.1L1690.9,520.3L1694.8,524.1L1698.7,520.3L1702.6,524.1L1706.5,520.3L1710.4,524.1L1714.3,520.3L1718.2,524.1L1722.1,520.3L1726.0,524.1L1729.9,520.3L1733.8,524.1L1737.7,520.3L1741.6,524.1L1745.5,520.3L1749.4,524.1L1753.3,520.3L1757.2,524.1L1761.1,520.3L1765.0,524.1L1768.9,520.3L1769.4,520.8M1903.2,522.2L1905.1,520.3L1909.0,524.1L1912.9,520.3L1916.8,524.1L1920.7,520.3L1924.6,524.1L1928.5,520.3L1932.4,524.1L1936.3,520.3L1940.2,524.1L1944.1,520.3L1948.0,524.1L1951.9,520.3L1955.8,524.1L1959.7,520.3L1963.6,524.1L1967.5,520.3L1971.4,524.1L1975.3,520.3L1979.2,524.1L1983.1,520.3L1987.0,524.1L1990.9,520.3L1994.8,524.1L1998.7,520.3L2002.6,524.1L2004.6,522.2M2020.8,522.2L2022.7,520.3L2026.6,524.1L2030.5,520.3L2034.4,524.1L2038.3,520.3L2042.2,524.1L2046.1,520.3L2050.0,524.1L2053.9,520.3L2057.8,524.1L2061.7,520.3L2065.6,524.1L2069.5,520.3L2073.4,524.1L2077.3,520.3L2081.2,524.1L2085.1,520.3L2089.0,524.1L2092.9,520.3L2096.8,524.1L2100.7,520.3L2104.6,524.1L2108.5,520.3L2112.4,524.1L2116.3,520.3L2120.2,524.1L2122.2,522.2M2138.4,522.2L2140.3,520.3L2144.2,524.1L2148.1,520.3L2152.0,524.1L2155.9,520.3L2159.8,524.1L2163.7,520.3L2167.6,524.1L2171.5,520.3L2175.4,524.1L2179.3,520.3L2183.2,524.1L2187.1,520.3L2191.0,524.1L2194.9,520.3L2198.8,524.1L2202.7,520.3L2206.2,523.7M2239.2,522.2L2241.1,520.3L2245.0,524.1L2248.9,520.3L2252.8,524.1L2256.7,520.3L2260.6,524.1L2264.5,520.3L2268.4,524.1L2272.3,520.3L2276.2,524.1L2280.1,520.3L2284.0,524.1L2287.9,520.3L2291.8,524.1L2295.7,520.3L2299.6,524.1L2303.5,520.3L2307.4,524.1L2311.3,520.3L2315.2,524.1L2319.1,520.3L2323.0,524.1L2326.9,520.3L2330.8,524.1L2334.7,520.3L2338.6,524.1L2342.5,520.3L2346.4,524.1L2350.3,520.3L2354.2,524.1L2358.1,520.3L2362.0,524.1L2365.9,520.3L2369.8,524.1L2373.7,520.3L2374.2,520.8M2390.4,522.2L2392.3,520.3L2396.2,524.1L2400.1,520.3L2404.0,524.1L2407.9,520.3L2411.8,524.1L2415.7,520.3L2419.6,524.1L2423.5,520.3L2427.4,524.1L2431.3,520.3L2435.2,524.1L2439.1,520.3L2443.0,524.1L2446.9,520.3L2450.8,524.1L2454.7,520.3L2458.6,524.1L2462.5,520.3L2466.4,524.1L2470.3,520.3L2474.2,524.1L2478.1,520.3L2482.0,524.1L2485.9,520.3L2489.8,524.1L2491.8,522.2M2508.0,522.2L2509.9,520.3L2513.8,524.1L2517.7,520.3L2521.6,524.1L2525.5,520.3L2529.4,524.1L2533.3,520.3L2537.2,524.1L2541.1,520.3L2545.0,524.1L2548.9,520.3L2552.8,524.1L2556.7,520.3L2560.6,524.1L2564.5,520.3L2568.4,524.1L2572.3,520.3L2576.2,524.1L2580.1,520.3L2584.0,524.1L2587.9,520.3L2591.8,524.1L2595.7,520.3L2599.6,524.1L2603.5,520.3L2607.4,524.1L2611.3,520.3L2615.2,524.1L2619.1,520.3L2623.0,524.1L2626.9,520.3L2630.8,524.1L2634.7,520.3L2638.6,524.1L2642.5,520.3L2643.0,520.8M1080.0,762.2L1081.9,760.3L1085.8,764.1L1089.7,760.3L1093.6,764.1L1097.5,760.3L1101.4,764.1L1105.3,760.3L1109.2,764.1L1113.1,760.3L1117.0,764.1L1120.9,760.3L1124.8,764.1L1128.7,760.3L1132.6,764.1L1136.5,760.3L1140.4,764.1L1144.3,760.3L1148.2,764.1L1152.1,760.3L1156.0,764.1L1159.9,760.3L1163.8,764.1L1167.7,760.3L1171.6,764.1L1175.5,760.3L1179.4,764.1L1183.3,760.3L1187.2,764.1L1191.1,760.3L1195.0,764.1L1198.9,760.3L1202.8,764.1L1206.7,760.3L1210.6,764.1L1214.5,760.3L1218.4,764.1L1222.3,760.3L1226.2,764.1L1230.1,760.3L1231.8,762.0M1248.0,762.2L1249.9,760.3L1253.8,764.1L1257.7,760.3L1261.6,764.1L1265.5,760.3L1269.4,764.1L1273.3,760.3L1277.2,764.1L1281.1,760.3L1285.0,764.1L1288.9,760.3L1292.8,764.1L1296.7,760.3L1300.6,764.1L1304.5,760.3L1308.4,764.1L1312.3,760.3L1316.2,764.1L1320.1,760.3L1324.0,764.1L1327.9,760.3L1331.8,764.1L1335.7,760.3L1339.6,764.1L1343.5,760.3L1347.4,764.1L1351.3,760.3L1355.2,764.1L1359.1,760.3L1363.0,764.1L1366.9,760.3L1370.8,764.1L1374.7,760.3L1378.6,764.1L1382.5,760.3L1386.4,764.1L1390.3,760.3L1394.2,764.1L1398.1,760.3L1402.0,764.1L1405.9,760.3L1409.8,764.1L1413.7,760.3L1416.6,763.1M1533.6,762.2L1535.5,760.3L1539.4,764.1L1543.3,760.3L1547.2,764.1L1551.1,760.3L1555.0,764.1L1558.9,760.3L1562.8,764.1L1566.7,760.3L1570.6,764.1L1574.5,760.3L1578.4,764.1L1582.3,760.3L1586.2,764.1L1590.1,760.3L1594.0,764.1L1597.9,760.3L1601.4,763.7M1802.4,762.2L1804.3,760.3L1808.2,764.1L1812.1,760.3L1816.0,764.1L1819.9,760.3L1823.8,764.1L1827.7,760.3L1831.6,764.1L1835.5,760.3L1839.4,764.1L1843.3,760.3L1847.2,764.1L1851.1,760.3L1855.0,764.1L1858.9,760.3L1862.8,764.1L1866.7,760.3L1870.6,764.1L1874.5,760.3L1878.4,764.1L1882.3,760.3L1886.2,764.1L1890.1,760.3L1894.0,764.1L1897.9,760.3L1901.8,764.1L1905.7,760.3L1909.6,764.1L1913.5,760.3L1917.4,764.1L1921.3,760.3L1925.2,764.1L1929.1,760.3L1933.0,764.1L1936.9,760.3L1940.8,764.1L1944.7,760.3L1948.6,764.1L1952.5,760.3L1954.2,762.0M1970.4,762.2L1972.3,760.3L1976.2,764.1L1980.1,760.3L1984.0,764.1L1987.9,760.3L1991.8,764.1L1995.7,760.3L1999.6,764.1L2003.5,760.3L2007.4,764.1L2011.3,760.3L2015.2,764.1L2019.1,760.3L2023.0,764.1L2026.9,760.3L2030.8,764.1L2034.7,760.3L2038.6,764.1L2042.5,760.3L2046.4,764.1L2050.3,760.3L2054.2,764.1L2058.1,760.3L2062.0,764.1L2065.9,760.3L2069.8,764.1L2073.7,760.3L2077.6,764.1L2081.5,760.3L2085.4,764.1L2089.3,760.3L2093.2,764.1L2097.1,760.3L2101.0,764.1L2104.9,760.3L2105.4,760.8M2222.4,762.2L2224.3,760.3L2228.2,764.1L2232.1,760.3L2236.0,764.1L2239.9,760.3L2243.8,764.1L2247.7,760.3L2251.6,764.1L2255.5,760.3L2259.4,764.1L2263.3,760.3L2267.2,764.1L2271.1,760.3L2275.0,764.1L2278.9,760.3L2282.8,764.1L2286.7,760.3L2290.6,764.1L2294.5,760.3L2298.4,764.1L2302.3,760.3L2306.2,764.1L2310.1,760.3L2314.0,764.1L2317.9,760.3L2321.8,764.1L2325.7,760.3L2329.6,764.1L2333.5,760.3L2337.4,764.1L2341.3,760.3L2345.2,764.1L2349.1,760.3L2353.0,764.1L2356.9,760.3L2360.8,764.1L2364.7,760.3L2368.6,764.1L2372.5,760.3L2376.4,764.1L2380.3,760.3L2384.2,764.1L2388.1,760.3L2392.0,764.1L2395.9,760.3L2399.8,764.1L2403.7,760.3L2407.6,764.1L2407.8,763.9M2424.0,762.2L2425.9,760.3L2429.8,764.1L2433.7,760.3L2437.6,764.1L2441.5,760.3L2445.4,764.1L2449.3,760.3L2453.2,764.1L2457.1,760.3L2461.0,764.1L2464.9,760.3L2468.8,764.1L2472.7,760.3L2476.6,764.1L2480.5,760.3L2484.4,764.1L2488.3,760.3L2492.2,764.1L2496.1,760.3L2500.0,764.1L2503.9,760.3L2507.8,764.1L2511.7,760.3L2515.6,764.1L2519.5,760.3L2523.4,764.1L2527.3,760.3L2531.2,764.1L2535.1,760.3L2539.0,764.1L2542.9,760.3L2546.8,764.1L2550.7,760.3L2554.6,764.1L2558.5,760.3L2562.4,764.1L2566.3,760.3L2570.2,764.1L2574.1,760.3L2575.8,762.0M2592.0,762.2L2593.9,760.3L2597.8,764.1L2601.7,760.3L2605.6,764.1L2609.5,760.3L2613.4,764.1L2617.3,760.3L2621.2,764.1L2625.1,760.3L2629.0,764.1L2632.9,760.3L2636.8,764.1L2640.7,760.3L2644.6,764.1L2648.5,760.3L2652.4,764.1L2656.3,760.3L2659.8,763.7M1130.4,810.2L1132.3,808.3L1136.2,812.1L1140.1,808.3L1144.0,812.1L1147.9,808.3L1151.8,812.1L1155.7,808.3L1159.6,812.1L1163.5,808.3L1167.4,812.1L1171.3,808.3L1175.2,812.1L1179.1,808.3L1183.0,812.1L1186.9,808.3L1190.8,812.1L1194.7,808.3L1198.6,812.1L1202.5,808.3L1206.4,812.1L1210.3,808.3L1214.2,812.1L1218.1,808.3L1222.0,812.1L1225.9,808.3L1229.8,812.1L1231.8,810.2M1332.0,810.2L1333.9,808.3L1337.8,812.1L1341.7,808.3L1345.6,812.1L1349.5,808.3L1353.4,812.1L1357.3,808.3L1361.2,812.1L1365.1,808.3L1369.0,812.1L1372.9,808.3L1376.8,812.1L1380.7,808.3L1384.6,812.1L1388.5,808.3L1392.4,812.1L1396.3,808.3L1400.2,812.1L1404.1,808.3L1408.0,812.1L1411.9,808.3L1415.8,812.1L1419.7,808.3L1423.6,812.1L1427.5,808.3L1431.4,812.1L1435.3,808.3L1439.2,812.1L1443.1,808.3L1447.0,812.1L1450.2,809.0M1533.6,810.2L1535.5,808.3L1539.4,812.1L1543.3,808.3L1547.2,812.1L1551.1,808.3L1555.0,812.1L1558.9,808.3L1562.8,812.1L1566.7,808.3L1570.6,812.1L1574.5,808.3L1578.4,812.1L1582.3,808.3L1586.2,812.1L1590.1,808.3L1594.0,812.1L1597.9,808.3L1601.8,812.1L1605.7,808.3L1609.6,812.1L1613.5,808.3L1617.4,812.1L1618.2,811.3M1735.2,810.2L1737.1,808.3L1741.0,812.1L1744.9,808.3L1748.8,812.1L1752.7,808.3L1756.6,812.1L1760.5,808.3L1764.4,812.1L1768.3,808.3L1772.2,812.1L1776.1,808.3L1780.0,812.1L1783.9,808.3L1787.8,812.1L1791.7,808.3L1795.6,812.1L1799.5,808.3L1803.4,812.1L1807.3,808.3L1811.2,812.1L1815.1,808.3L1819.0,812.1L1822.9,808.3L1826.8,812.1L1830.7,808.3L1834.6,812.1L1838.5,808.3L1842.4,812.1L1846.3,808.3L1850.2,812.1L1853.4,809.0M1869.6,810.2L1871.5,808.3L1875.4,812.1L1879.3,808.3L1883.2,812.1L1887.1,808.3L1891.0,812.1L1894.9,808.3L1898.8,812.1L1902.7,808.3L1906.6,812.1L1910.5,808.3L1914.4,812.1L1918.3,808.3L1922.2,812.1L1926.1,808.3L1930.0,812.1L1933.9,808.3L1937.8,812.1L1941.7,808.3L1945.6,812.1L1949.5,808.3L1953.4,812.1L1957.3,808.3L1961.2,812.1L1965.1,808.3L1969.0,812.1L1972.9,808.3L1976.8,812.1L1980.7,808.3L1984.6,812.1L1988.5,808.3L1992.4,812.1L1996.3,808.3L2000.2,812.1L2004.1,808.3L2008.0,812.1L2011.9,808.3L2015.8,812.1L2019.7,808.3L2021.4,810.0M2205.6,810.2L2207.5,808.3L2211.4,812.1L2215.3,808.3L2219.2,812.1L2223.1,808.3L2227.0,812.1L2230.9,808.3L2234.8,812.1L2238.7,808.3L2242.6,812.1L2246.5,808.3L2250.4,812.1L2254.3,808.3L2258.2,812.1L2262.1,808.3L2266.0,812.1L2269.9,808.3L2273.8,812.1L2277.7,808.3L2281.6,812.1L2285.5,808.3L2289.4,812.1L2293.3,808.3L2297.2,812.1L2301.1,808.3L2305.0,812.1L2308.9,808.3L2312.8,812.1L2316.7,808.3L2320.6,812.1L2324.5,808.3L2328.4,812.1L2332.3,808.3L2336.2,812.1L2340.1,808.3L2340.6,808.8M2356.8,810.2L2358.7,808.3L2362.6,812.1L2366.5,808.3L2370.4,812.1L2374.3,808.3L2378.2,812.1L2382.1,808.3L2386.0,812.1L2389.9,808.3L2393.8,812.1L2397.7,808.3L2401.6,812.1L2405.5,808.3L2409.4,812.1L2413.3,808.3L2417.2,812.1L2421.1,808.3L2425.0,812.1L2428.9,808.3L2432.8,812.1L2436.7,808.3L2440.6,812.1L2444.5,808.3L2448.4,812.1L2452.3,808.3L2456.2,812.1L2460.1,808.3L2464.0,812.1L2467.9,808.3L2471.8,812.1L2475.0,809.0M2625.6,810.2L2627.5,808.3L2631.4,812.1L2635.3,808.3L2639.2,812.1L2643.1,808.3L2647.0,812.1L2650.9,808.3L2654.8,812.1L2658.7,808.3L2662.6,812.1L2666.5,808.3L2670.4,812.1L2674.3,808.3L2678.2,812.1L2682.1,808.3L2686.0,812.1L2689.9,808.3L2693.8,812.1L2697.7,808.3L2701.6,812.1L2705.5,808.3L2709.4,812.1L2710.2,811.3M1080.0,1050.2L1081.9,1048.3L1085.8,1052.1L1089.7,1048.3L1093.6,1052.1L1097.5,1048.3L1101.4,1052.1L1105.3,1048.3L1109.2,1052.1L1113.1,1048.3L1117.0,1052.1L1120.9,1048.3L1124.8,1052.1L1128.7,1048.3L1132.6,1052.1L1136.5,1048.3L1140.4,1052.1L1144.3,1048.3L1148.2,1052.1L1152.1,1048.3L1156.0,1052.1L1159.9,1048.3L1163.8,1052.1L1167.7,1048.3L1171.6,1052.1L1175.5,1048.3L1179.4,1052.1L1183.3,1048.3L1187.2,1052.1L1191.1,1048.3L1195.0,1052.1L1198.2,1049.0M1214.4,1050.2L1216.3,1048.3L1220.2,1052.1L1224.1,1048.3L1228.0,1052.1L1231.9,1048.3L1235.8,1052.1L1239.7,1048.3L1243.6,1052.1L1247.5,1048.3L1251.4,1052.1L1255.3,1048.3L1259.2,1052.1L1263.1,1048.3L1267.0,1052.1L1270.9,1048.3L1274.8,1052.1L1278.7,1048.3L1282.6,1052.1L1286.5,1048.3L1290.4,1052.1L1294.3,1048.3L1298.2,1052.1L1302.1,1048.3L1306.0,1052.1L1309.9,1048.3L1313.8,1052.1L1317.7,1048.3L1321.6,1052.1L1325.5,1048.3L1329.4,1052.1L1333.3,1048.3L1337.2,1052.1L1341.1,1048.3L1345.0,1052.1L1348.9,1048.3L1349.4,1048.8M1365.6,1050.2L1367.5,1048.3L1371.4,1052.1L1375.3,1048.3L1379.2,1052.1L1383.1,1048.3L1387.0,1052.1L1390.9,1048.3L1394.8,1052.1L1398.7,1048.3L1402.6,1052.1L1406.5,1048.3L1410.4,1052.1L1414.3,1048.3L1418.2,1052.1L1422.1,1048.3L1426.0,1052.1L1429.9,1048.3L1433.8,1052.1L1437.7,1048.3L1441.6,1052.1L1445.5,1048.3L1449.4,1052.1L1453.3,1048.3L1457.2,1052.1L1461.1,1048.3L1465.0,1052.1L1468.9,1048.3L1472.8,1052.1L1476.7,1048.3L1480.6,1052.1L1484.5,1048.3L1488.4,1052.1L1492.3,1048.3L1496.2,1052.1L1500.1,1048.3L1504.0,1052.1L1507.9,1048.3L1511.8,1052.1L1515.7,1048.3L1519.6,1052.1L1523.5,1048.3L1527.4,1052.1L1531.3,1048.3L1534.2,1051.1M1684.8,1050.2L1686.7,1048.3L1690.6,1052.1L1694.5,1048.3L1698.4,1052.1L1702.3,1048.3L1706.2,1052.1L1710.1,1048.3L1714.0,1052.1L1717.9,1048.3L1721.8,1052.1L1725.7,1048.3L1729.6,1052.1L1733.5,1048.3L1737.4,1052.1L1741.3,1048.3L1745.2,1052.1L1749.1,1048.3L1753.0,1052.1L1756.9,1048.3L1760.8,1052.1L1764.7,1048.3L1768.6,1052.1L1769.4,1051.3M1785.6,1050.2L1787.5,1048.3L1791.4,1052.1L1795.3,1048.3L1799.2,1052.1L1803.1,1048.3L1807.0,1052.1L1810.9,1048.3L1814.8,1052.1L1818.7,1048.3L1822.6,1052.1L1826.5,1048.3L1830.4,1052.1L1834.3,1048.3L1838.2,1052.1L1842.1,1048.3L1846.0,1052.1L1849.9,1048.3L1853.8,1052.1L1857.7,1048.3L1861.6,1052.1L1865.5,1048.3L1869.4,1052.1L1873.3,1048.3L1877.2,1052.1L1881.1,1048.3L1885.0,1052.1L1888.9,1048.3L1892.8,1052.1L1896.7,1048.3L1900.6,1052.1L1903.8,1049.0M1920.0,1050.2L1921.9,1048.3L1925.8,1052.1L1929.7,1048.3L1933.6,1052.1L1937.5,1048.3L1941.4,1052.1L1945.3,1048.3L1949.2,1052.1L1953.1,1048.3L1957.0,1052.1L1960.9,1048.3L1964.8,1052.1L1968.7,1048.3L1972.6,1052.1L1976.5,1048.3L1980.4,1052.1L1984.3,1048.3L1987.8,1051.7M2172.0,1050.2L2173.9,1048.3L2177.8,1052.1L2181.7,1048.3L2185.6,1052.1L2189.5,1048.3L2193.4,1052.1L2197.3,1048.3L2201.2,1052.1L2205.1,1048.3L2209.0,1052.1L2212.9,1048.3L2216.8,1052.1L2220.7,1048.3L2224.6,1052.1L2228.5,1048.3L2232.4,1052.1L2236.3,1048.3L2240.2,1052.1L2244.1,1048.3L2248.0,1052.1L2251.9,1048.3L2255.8,1052.1L2259.7,1048.3L2263.6,1052.1L2267.5,1048.3L2271.4,1052.1L2275.3,1048.3L2279.2,1052.1L2283.1,1048.3L2287.0,1052.1L2290.9,1048.3L2294.8,1052.1L2298.7,1048.3L2302.6,1052.1L2306.5,1048.3L2310.4,1052.1L2314.3,1048.3L2318.2,1052.1L2322.1,1048.3L2323.8,1050.0M2390.4,1050.2L2392.3,1048.3L2396.2,1052.1L2400.1,1048.3L2404.0,1052.1L2407.9,1048.3L2411.8,1052.1L2415.7,1048.3L2419.6,1052.1L2423.5,1048.3L2427.4,1052.1L2431.3,1048.3L2435.2,1052.1L2439.1,1048.3L2443.0,1052.1L2446.9,1048.3L2450.8,1052.1L2454.7,1048.3L2458.6,1052.1L2462.5,1048.3L2466.4,1052.1L2470.3,1048.3L2474.2,1052.1L2475.0,1051.3M2491.2,1050.2L2493.1,1048.3L2497.0,1052.1L2500.9,1048.3L2504.8,1052.1L2508.7,1048.3L2512.6,1052.1L2516.5,1048.3L2520.4,1052.1L2524.3,1048.3L2528.2,1052.1L2532.1,1048.3L2536.0,1052.1L2539.9,1048.3L2543.8,1052.1L2547.7,1048.3L2551.6,1052.1L2555.5,1048.3L2559.0,1051.7M2575.2,1050.2L2577.1,1048.3L2581.0,1052.1L2584.9,1048.3L2588.8,1052.1L2592.7,1048.3L2596.6,1052.1L2600.5,1048.3L2604.4,1052.1L2608.3,1048.3L2612.2,1052.1L2616.1,1048.3L2620.0,1052.1L2623.9,1048.3L2627.8,1052.1L2631.7,1048.3L2635.6,1052.1L2639.5,1048.3L2643.4,1052.1L2647.3,1048.3L2651.2,1052.1L2655.1,1048.3L2659.0,1052.1L2662.9,1048.3L2666.8,1052.1L2670.7,1048.3L2674.6,1052.1L2678.5,1048.3L2682.4,1052.1L2686.3,1048.3L2690.2,1052.1L2693.4,1049.0M1063.2,1098.2L1065.1,1096.3L1069.0,1100.1L1072.9,1096.3L1076.8,1100.1L1080.7,1096.3L1084.6,1100.1L1088.5,1096.3L1092.4,1100.1L1096.3,1096.3L1100.2,1100.1L1104.1,1096.3L1108.0,1100.1L1111.9,1096.3L1115.8,1100.1L1119.7,1096.3L1123.6,1100.1L1127.5,1096.3L1131.4,1100.1L1135.3,1096.3L1139.2,1100.1L1143.1,1096.3L1147.0,1100.1L1150.9,1096.3L1154.8,1100.1L1158.7,1096.3L1162.6,1100.1L1164.6,1098.2M1180.8,1098.2L1182.7,1096.3L1186.6,1100.1L1190.5,1096.3L1194.4,1100.1L1198.3,1096.3L1202.2,1100.1L1206.1,1096.3L1210.0,1100.1L1213.9,1096.3L1217.8,1100.1L1221.7,1096.3L1225.6,1100.1L1229.5,1096.3L1233.4,1100.1L1237.3,1096.3L1241.2,1100.1L1245.1,1096.3L1249.0,1100.1L1252.9,1096.3L1256.8,1100.1L1260.7,1096.3L1264.6,1100.1L1268.5,1096.3L1272.4,1100.1L1276.3,1096.3L1280.2,1100.1L1284.1,1096.3L1288.0,1100.1L1291.9,1096.3L1295.8,1100.1L1299.0,1097.0M1315.2,1098.2L1317.1,1096.3L1321.0,1100.1L1324.9,1096.3L1328.8,1100.1L1332.7,1096.3L1336.6,1100.1L1340.5,1096.3L1344.4,1100.1L1348.3,1096.3L1352.2,1100.1L1356.1,1096.3L1360.0,1100.1L1363.9,1096.3L1367.8,1100.1L1371.7,1096.3L1375.6,1100.1L1379.5,1096.3L1383.4,1100.1L1387.3,1096.3L1391.2,1100.1L1395.1,1096.3L1399.0,1100.1L1402.9,1096.3L1406.8,1100.1L1410.7,1096.3L1414.6,1100.1L1416.6,1098.2M1449.6,1098.2L1451.5,1096.3L1455.4,1100.1L1459.3,1096.3L1463.2,1100.1L1467.1,1096.3L1471.0,1100.1L1474.9,1096.3L1478.8,1100.1L1482.7,1096.3L1486.6,1100.1L1490.5,1096.3L1494.4,1100.1L1498.3,1096.3L1502.2,1100.1L1506.1,1096.3L1510.0,1100.1L1513.9,1096.3L1517.8,1100.1L1521.7,1096.3L1525.6,1100.1L1529.5,1096.3L1533.4,1100.1L1537.3,1096.3L1541.2,1100.1L1545.1,1096.3L1549.0,1100.1L1552.9,1096.3L1556.8,1100.1L1560.7,1096.3L1564.6,1100.1L1568.5,1096.3L1572.4,1100.1L1576.3,1096.3L1580.2,1100.1L1584.1,1096.3L1584.6,1096.8M1701.6,1098.2L1703.5,1096.3L1707.4,1100.1L1711.3,1096.3L1715.2,1100.1L1719.1,1096.3L1723.0,1100.1L1726.9,1096.3L1730.8,1100.1L1734.7,1096.3L1738.6,1100.1L1742.5,1096.3L1746.4,1100.1L1750.3,1096.3L1754.2,1100.1L1758.1,1096.3L1762.0,1100.1L1765.9,1096.3L1769.8,1100.1L1773.7,1096.3L1777.6,1100.1L1781.5,1096.3L1785.4,1100.1L1789.3,1096.3L1793.2,1100.1L1797.1,1096.3L1801.0,1100.1L1804.9,1096.3L1808.8,1100.1L1812.7,1096.3L1816.6,1100.1L1820.5,1096.3L1824.4,1100.1L1828.3,1096.3L1832.2,1100.1L1836.1,1096.3L1836.6,1096.8M1953.6,1098.2L1955.5,1096.3L1959.4,1100.1L1963.3,1096.3L1967.2,1100.1L1971.1,1096.3L1975.0,1100.1L1978.9,1096.3L1982.8,1100.1L1986.7,1096.3L1990.6,1100.1L1994.5,1096.3L1998.4,1100.1L2002.3,1096.3L2006.2,1100.1L2010.1,1096.3L2014.0,1100.1L2017.9,1096.3L2021.8,1100.1L2025.7,1096.3L2029.6,1100.1L2033.5,1096.3L2037.4,1100.1L2038.2,1099.3M2054.4,1098.2L2056.3,1096.3L2060.2,1100.1L2064.1,1096.3L2068.0,1100.1L2071.9,1096.3L2075.8,1100.1L2079.7,1096.3L2083.6,1100.1L2087.5,1096.3L2091.4,1100.1L2095.3,1096.3L2099.2,1100.1L2103.1,1096.3L2107.0,1100.1L2110.9,1096.3L2114.8,1100.1L2118.7,1096.3L2122.6,1100.1L2126.5,1096.3L2130.4,1100.1L2134.3,1096.3L2138.2,1100.1L2142.1,1096.3L2146.0,1100.1L2149.9,1096.3L2153.8,1100.1L2157.7,1096.3L2161.6,1100.1L2165.5,1096.3L2169.4,1100.1L2172.6,1097.0M2323.2,1098.2L2325.1,1096.3L2329.0,1100.1L2332.9,1096.3L2336.8,1100.1L2340.7,1096.3L2344.6,1100.1L2348.5,1096.3L2352.4,1100.1L2356.3,1096.3L2360.2,1100.1L2364.1,1096.3L2368.0,1100.1L2371.9,1096.3L2375.8,1100.1L2379.7,1096.3L2383.6,1100.1L2387.5,1096.3L2391.4,1100.1L2395.3,1096.3L2399.2,1100.1L2403.1,1096.3L2407.0,1100.1L2410.9,1096.3L2414.8,1100.1L2418.7,1096.3L2422.6,1100.1L2426.5,1096.3L2430.4,1100.1L2434.3,1096.3L2438.2,1100.1L2442.1,1096.3L2446.0,1100.1L2449.9,1096.3L2453.8,1100.1L2457.7,1096.3L2458.2,1096.8M2474.4,1098.2L2476.3,1096.3L2480.2,1100.1L2484.1,1096.3L2488.0,1100.1L2491.9,1096.3L2495.8,1100.1L2499.7,1096.3L2503.6,1100.1L2507.5,1096.3L2511.4,1100.1L2515.3,1096.3L2519.2,1100.1L2523.1,1096.3L2527.0,1100.1L2530.9,1096.3L2534.8,1100.1L2538.7,1096.3L2542.2,1099.7M1080.0,1338.2L1081.9,1336.3L1085.8,1340.1L1089.7,1336.3L1093.6,1340.1L1097.5,1336.3L1101.4,1340.1L1105.3,1336.3L1109.2,1340.1L1113.1,1336.3L1117.0,1340.1L1120.9,1336.3L1124.8,1340.1L1128.7,1336.3L1132.6,1340.1L1136.5,1336.3L1140.4,1340.1L1144.3,1336.3L1148.2,1340.1L1152.1,1336.3L1156.0,1340.1L1159.9,1336.3L1163.8,1340.1L1164.6,1339.3M1180.8,1338.2L1182.7,1336.3L1186.6,1340.1L1190.5,1336.3L1194.4,1340.1L1198.3,1336.3L1202.2,1340.1L1206.1,1336.3L1210.0,1340.1L1213.9,1336.3L1217.8,1340.1L1221.7,1336.3L1225.6,1340.1L1229.5,1336.3L1233.4,1340.1L1237.3,1336.3L1241.2,1340.1L1245.1,1336.3L1249.0,1340.1L1252.9,1336.3L1256.8,1340.1L1260.7,1336.3L1264.6,1340.1L1268.5,1336.3L1272.4,1340.1L1276.3,1336.3L1280.2,1340.1L1284.1,1336.3L1288.0,1340.1L1291.9,1336.3L1295.8,1340.1L1299.7,1336.3L1303.6,1340.1L1307.5,1336.3L1311.4,1340.1L1315.3,1336.3L1315.8,1336.8M1332.0,1338.2L1333.9,1336.3L1337.8,1340.1L1341.7,1336.3L1345.6,1340.1L1349.5,1336.3L1353.4,1340.1L1357.3,1336.3L1361.2,1340.1L1365.1,1336.3L1369.0,1340.1L1372.9,1336.3L1376.8,1340.1L1380.7,1336.3L1384.6,1340.1L1388.5,1336.3L1392.4,1340.1L1396.3,1336.3L1400.2,1340.1L1404.1,1336.3L1408.0,1340.1L1411.9,1336.3L1415.8,1340.1L1419.7,1336.3L1423.6,1340.1L1427.5,1336.3L1431.4,1340.1L1433.4,1338.2M1449.6,1338.2L1451.5,1336.3L1455.4,1340.1L1459.3,1336.3L1463.2,1340.1L1467.1,1336.3L1471.0,1340.1L1474.9,1336.3L1478.8,1340.1L1482.7,1336.3L1486.6,1340.1L1490.5,1336.3L1494.4,1340.1L1498.3,1336.3L1502.2,1340.1L1506.1,1336.3L1510.0,1340.1L1513.9,1336.3L1517.8,1340.1L1521.7,1336.3L1525.6,1340.1L1529.5,1336.3L1533.4,1340.1L1537.3,1336.3L1541.2,1340.1L1545.1,1336.3L1549.0,1340.1L1552.9,1336.3L1556.8,1340.1L1560.7,1336.3L1564.6,1340.1L1568.5,1336.3L1572.4,1340.1L1576.3,1336.3L1580.2,1340.1L1584.1,1336.3L1588.0,1340.1L1591.9,1336.3L1595.8,1340.1L1599.7,1336.3L1601.4,1338.0M1668.0,1338.2L1669.9,1336.3L1673.8,1340.1L1677.7,1336.3L1681.6,1340.1L1685.5,1336.3L1689.4,1340.1L1693.3,1336.3L1697.2,1340.1L1701.1,1336.3L1705.0,1340.1L1708.9,1336.3L1712.8,1340.1L1716.7,1336.3L1720.6,1340.1L1724.5,1336.3L1728.4,1340.1L1732.3,1336.3L1736.2,1340.1L1740.1,1336.3L1744.0,1340.1L1747.9,1336.3L1751.8,1340.1L1755.7,1336.3L1759.6,1340.1L1763.5,1336.3L1767.4,1340.1L1769.4,1338.2M2037.6,1338.2L2039.5,1336.3L2043.4,1340.1L2047.3,1336.3L2051.2,1340.1L2055.1,1336.3L2059.0,1340.1L2062.9,1336.3L2066.8,1340.1L2070.7,1336.3L2074.6,1340.1L2078.5,1336.3L2082.4,1340.1L2086.3,1336.3L2090.2,1340.1L2094.1,1336.3L2098.0,1340.1L2101.9,1336.3L2105.8,1340.1L2109.7,1336.3L2113.6,1340.1L2117.5,1336.3L2121.4,1340.1L2122.2,1339.3M2138.4,1338.2L2140.3,1336.3L2144.2,1340.1L2148.1,1336.3L2152.0,1340.1L2155.9,1336.3L2159.8,1340.1L2163.7,1336.3L2167.6,1340.1L2171.5,1336.3L2175.4,1340.1L2179.3,1336.3L2183.2,1340.1L2187.1,1336.3L2191.0,1340.1L2194.9,1336.3L2198.8,1340.1L2202.7,1336.3L2206.6,1340.1L2210.5,1336.3L2214.4,1340.1L2218.3,1336.3L2222.2,1340.1L2226.1,1336.3L2230.0,1340.1L2233.9,1336.3L2237.8,1340.1L2241.7,1336.3L2245.6,1340.1L2249.5,1336.3L2253.4,1340.1L2257.3,1336.3L2261.2,1340.1L2265.1,1336.3L2269.0,1340.1L2272.9,1336.3L2276.8,1340.1L2280.7,1336.3L2284.6,1340.1L2288.5,1336.3L2290.2,1338.0M2457.6,1338.2L2459.5,1336.3L2463.4,1340.1L2467.3,1336.3L2471.2,1340.1L2475.1,1336.3L2479.0,1340.1L2482.9,1336.3L2486.8,1340.1L2490.7,1336.3L2494.6,1340.1L2498.5,1336.3L2502.4,1340.1L2506.3,1336.3L2510.2,1340.1L2514.1,1336.3L2518.0,1340.1L2521.9,1336.3L2525.8,1340.1L2529.7,1336.3L2533.6,1340.1L2537.5,1336.3L2541.4,1340.1L2545.3,1336.3L2549.2,1340.1L2553.1,1336.3L2557.0,1340.1L2559.0,1338.2M2575.2,1338.2L2577.1,1336.3L2581.0,1340.1L2584.9,1336.3L2588.8,1340.1L2592.7,1336.3L2596.6,1340.1L2600.5,1336.3L2604.4,1340.1L2608.3,1336.3L2612.2,1340.1L2616.1,1336.3L2620.0,1340.1L2623.9,1336.3L2627.8,1340.1L2631.7,1336.3L2635.6,1340.1L2639.5,1336.3L2643.4,1340.1L2647.3,1336.3L2651.2,1340.1L2655.1,1336.3L2659.0,1340.1L2662.9,1336.3L2666.8,1340.1L2670.7,1336.3L2674.6,1340.1L2678.5,1336.3L2682.4,1340.1L2686.3,1336.3L2690.2,1340.1L2694.1,1336.3L2698.0,1340.1L2701.9,1336.3L2705.8,1340.1L2709.7,1336.3L2710.2,1336.8" fill="none" stroke="#659c6b" stroke-width="1.500" stroke-linejoin="miter"/></svg></div>
<div style="left:2436px;top:248px;width:190px;height:44px;background:#2b2b2b;border-radius:8px"></div>
<svg style="left:2453px;top:259px;" width="26" height="26" viewBox="0 0 26 26"><path d="M2,9.300L10.500,16.800L23.700,2.400" fill="none" stroke="#499c54" stroke-width="4.600"/><path d="M0.800,24L5,20.500L9,24L13,20.500L17,24L21,20.500L24,23" fill="none" stroke="#499c54" stroke-width="1.700"/></svg>
<svg style="left:2555px;top:264px;" width="18" height="12" viewBox="0 0 18 12"><path d="M1.500,10.500L9,2.500L16.500,10.500" fill="none" stroke="#afb1b3" stroke-width="2.6"/></svg>
<svg style="left:2597px;top:264px;" width="18" height="12" viewBox="0 0 18 12"><path d="M1.500,1.500L9,9.500L16.500,1.500" fill="none" stroke="#afb1b3" stroke-width="2.6"/></svg>
<div style="left:2608px;top:300px;width:16px;height:186px;background:#4c4c4c;border-radius:8px"></div>
<div style="left:846px;top:1358px;width:1784px;height:28px;background:#3c3f41;"></div>
<div style="left:851px;top:1363px;width:362px;height:17.5px;background:#56585a;border-radius:9px;box-shadow:0 0 0 1px #48494b"></div>
<div style="left:112px;top:1430px;width:2560px;height:2px;background:#323232;"></div>
<div style="left:112px;top:1472px;width:2560px;height:1.6px;background:#464849;"></div>
<svg style="left:181px;top:1439px;" width="20" height="28" viewBox="0 0 20 28"><g fill="none" stroke="#afb1b3" stroke-width="3"><path d="M5,6V22"/><path d="M15,9C15,15 5,13 5,19"/></g><circle cx="5" cy="5" r="3.600" fill="#afb1b3"/><circle cx="5" cy="23" r="3.600" fill="#afb1b3"/><circle cx="15" cy="8" r="3.600" fill="#afb1b3"/></svg>
<svg style="left:414px;top:1444px;" width="20" height="18" viewBox="0 0 20 18"><g fill="#afb1b3"><rect x="0" y="0" width="4" height="3.600"/><rect x="6.500" y="0" width="13.500" height="3.600"/><rect x="0" y="7" width="4" height="3.600"/><rect x="6.500" y="7" width="13.500" height="3.600"/><rect x="0" y="14" width="4" height="3.600"/><rect x="6.500" y="14" width="13.500" height="3.600"/></g></svg>
<svg style="left:549px;top:1442px;" width="21" height="21" viewBox="0 0 21 21"><circle cx="10.500" cy="10.500" r="10.500" fill="#afb1b3"/><rect x="9" y="4.500" width="3" height="8" fill="#3c3f41"/><rect x="9" y="14" width="3" height="3" fill="#3c3f41"/></svg>
<svg style="left:722px;top:1440px;" width="26" height="26" viewBox="0 0 26 26"><g fill="#afb1b3"><path d="M13,1L25,7.500L13,14L1,7.500Z"/><path d="M3.500,11.500L13,16.500L22.500,11.500L25,13L13,19.500L1,13Z"/><path d="M3.500,17L13,22L22.500,17L25,18.500L13,25L1,18.500Z"/></g></svg>
<svg style="left:982px;top:1441.5px;" width="22" height="22" viewBox="0 0 20 20"><path d="M9.9,0C5,0 5.3,2.1 5.3,2.1V4.3H10V5H3.4C3.4,5 0,4.6 0,9.7C0,14.8 3,14.6 3,14.6H4.7V12.2C4.7,12.2 4.6,9.3 7.6,9.3H12.3C12.3,9.3 15,9.35 15,6.6V2.7C15,2.7 15.4,0 9.9,0Z" fill="#afb1b3"/><path d="M10.1,19.9C15,19.9 14.7,17.8 14.7,17.8V15.6H10V14.9H16.6C16.6,14.9 20,15.3 20,10.2C20,5.1 17,5.3 17,5.3H15.3V7.7C15.3,7.7 15.4,10.6 12.4,10.6H7.7C7.7,10.6 5,10.55 5,13.3V17.2C5,17.2 4.6,19.9 10.1,19.9Z" fill="#afb1b3"/></svg>
<svg style="left:1220px;top:1442px;" width="21" height="20" viewBox="0 0 21 20"><rect x="0" y="0" width="21" height="20" fill="#afb1b3"/><path d="M3.500,5L8,9.500L3.500,14" fill="none" stroke="#3c3f41" stroke-width="2.200"/><rect x="10" y="13" width="7" height="2.200" fill="#3c3f41"/></svg>
<svg style="left:2476px;top:1440px;" width="26" height="26" viewBox="0 0 26 26"><path d="M13,0A13,13 0 0,1 26,13V26H13A13,13 0 0,1 13,0Z" fill="#499c54"/></svg>
<svg style="left:124px;top:1482px;" width="24" height="24" viewBox="0 0 24 24"><path d="M5.200,1H23V18.800H5.200Z" fill="none" stroke="#afb1b3" stroke-width="2"/><path d="M1,5.500V23H20" fill="none" stroke="#afb1b3" stroke-width="2"/></svg>
<svg style="left:2621px;top:1482px;" width="24" height="22" viewBox="0 0 24 22"><rect x="7.300" y="8.500" width="16" height="13" fill="#afb1b3"/><path d="M2.200,10.500V6A4.700,4.700 0 0,1 11.600,6V9" fill="none" stroke="#afb1b3" stroke-width="2.400"/></svg>
<span class="t" style="top:89.67px;font-size:26.5px;color:#a9aaac;letter-spacing:0.372px;left:1155.00px;font-weight:700;-webkit-text-stroke:0.45px currentColor;">airflow – s3_downloaded_posts.json</span>
<span class="t" style="top:148.18px;font-size:24px;color:#bbbbbb;letter-spacing:0.971px;left:136.30px;font-weight:700;">airflow</span>
<span class="t" style="top:148.18px;font-size:24px;color:#bbbbbb;letter-spacing:0.712px;left:253.00px;">data</span>
<span class="t" style="top:148.18px;font-size:24px;color:#bbbbbb;letter-spacing:0.839px;left:368.30px;">s3_downloaded_posts.json</span>
<span class="t" style="top:203.64px;font-size:27px;color:#bbbbbb;letter-spacing:0.495px;left:217.40px;">Project</span>
<span class="t" style="top:252.04px;font-size:27px;color:#bbbbbb;letter-spacing:0.448px;left:240.30px;font-weight:700;">airflow</span>
<span class="t" style="top:252.04px;font-size:27px;color:#7f8284;letter-spacing:0.801px;left:343.00px;">~/airflow</span>
<span class="t" style="top:292.04px;font-size:27px;color:#bbbbbb;letter-spacing:0.751px;left:275.50px;">dags</span>
<span class="t" style="top:332.04px;font-size:27px;color:#bbbbbb;letter-spacing:0.343px;left:312.00px;">api_dag.py</span>
<span class="t" style="top:372.04px;font-size:27px;color:#bbbbbb;letter-spacing:0.611px;left:313.00px;">first_dag.py</span>
<span class="t" style="top:412.04px;font-size:27px;color:#bbbbbb;letter-spacing:0.369px;left:312.00px;">parallel_dag.py</span>
<span class="t" style="top:452.04px;font-size:27px;color:#bbbbbb;letter-spacing:0.489px;left:312.00px;">postgres_db_dag.py</span>
<span class="t" style="top:492.04px;font-size:27px;color:#bbbbbb;letter-spacing:0.435px;left:313.00px;">s3_download.py</span>
<span class="t" style="top:532.04px;font-size:27px;color:#bbbbbb;letter-spacing:0.461px;left:313.00px;">s3_upload.py</span>
<span class="t" style="top:572.04px;font-size:27px;color:#bbbbbb;letter-spacing:0.271px;left:313.00px;">xcom_dag.py</span>
<span class="t" style="top:612.04px;font-size:27px;color:#bbbbbb;letter-spacing:0.189px;left:275.50px;">data</span>
<span class="t" style="top:652.04px;font-size:27px;color:#bbbbbb;letter-spacing:0.717px;left:312.00px;">posts.json</span>
<span class="t" style="top:692.04px;font-size:27px;color:#bbbbbb;letter-spacing:0.608px;left:313.00px;">s3_downloaded_posts.json</span>
<span class="t" style="top:732.04px;font-size:27px;color:#bbbbbb;letter-spacing:0.890px;left:275.50px;">logs</span>
<span class="t" style="top:772.04px;font-size:27px;color:#bbbbbb;letter-spacing:0.903px;left:275.50px;">misc</span>
<span class="t" style="top:812.04px;font-size:27px;color:#bbbbbb;letter-spacing:0.927px;left:275.50px;">airflow.cfg</span>
<span class="t" style="top:852.04px;font-size:27px;color:#bbbbbb;letter-spacing:0.884px;left:275.50px;">airflow.db</span>
<span class="t" style="top:892.04px;font-size:27px;color:#bbbbbb;letter-spacing:0.835px;left:275.50px;">airflow-scheduler.err</span>
<span class="t" style="top:932.04px;font-size:27px;color:#bbbbbb;letter-spacing:0.910px;left:275.50px;">airflow-scheduler.log</span>
<span class="t" style="top:972.04px;font-size:27px;color:#bbbbbb;letter-spacing:0.829px;left:275.50px;">airflow-scheduler.out</span>
<span class="t" style="top:1012.04px;font-size:27px;color:#bbbbbb;letter-spacing:0.940px;left:275.50px;">airflow-scheduler.pid</span>
<span class="t" style="top:1052.04px;font-size:27px;color:#bbbbbb;letter-spacing:0.841px;left:275.50px;">airflow-webserver.err</span>
<span class="t" style="top:1092.04px;font-size:27px;color:#bbbbbb;letter-spacing:0.901px;left:275.50px;">airflow-webserver.log</span>
<span class="t" style="top:1132.04px;font-size:27px;color:#bbbbbb;letter-spacing:0.815px;left:275.50px;">airflow-webserver.out</span>
<span class="t" style="top:1172.04px;font-size:27px;color:#bbbbbb;letter-spacing:0.926px;left:275.50px;">airflow-webserver.pid</span>
<span class="t" style="top:1212.04px;font-size:27px;color:#bbbbbb;letter-spacing:0.957px;left:275.50px;">airflow-webserver-monitor.pid</span>
<span class="t" style="top:1252.04px;font-size:27px;color:#bbbbbb;letter-spacing:0.957px;left:275.50px;">db_test.db</span>
<span class="t" style="top:1292.04px;font-size:27px;color:#bbbbbb;letter-spacing:0.537px;left:277.50px;">webserver_config.py</span>
<span class="t" style="top:1332.04px;font-size:27px;color:#bbbbbb;letter-spacing:0.412px;left:238.30px;">External Libraries</span>
<span class="t" style="top:1372.04px;font-size:27px;color:#bbbbbb;letter-spacing:0.378px;left:239.30px;">Scratches and Consoles</span>
<span class="t" style="top:149.23px;font-size:23px;color:#bbbbbb;letter-spacing:0.038px;left:2059.00px;">user_processing</span>
<span class="t" style="top:205.65px;font-size:22.5px;color:#bbbbbb;letter-spacing:0.125px;left:750.40px;">s3_download.py</span>
<span class="t" style="top:205.65px;font-size:22.5px;color:#bbbbbb;letter-spacing:0.272px;left:1016.00px;">s3_downloaded_posts.json</span>
<span class="t" style="top:1209.53px;font-size:23px;color:#bbbbbb;left:2638.50px;-webkit-text-stroke:0.5px currentColor;">{</span>
<span class="t" style="top:1209.53px;font-size:23px;color:#bbbbbb;left:2654.50px;-webkit-text-stroke:0.5px currentColor;">}</span>
<span class="t" style="top:253.30px;font-size:30px;color:#a4a3a3;right:2033.20px;font-family:"Liberation Mono", monospace;letter-spacing:0.9px;transform:scaleX(.89);transform-origin:100% 50%;">1</span>
<span class="t" style="top:301.30px;font-size:30px;color:#606366;right:2032.20px;font-family:"Liberation Mono", monospace;letter-spacing:0.9px;transform:scaleX(.89);transform-origin:100% 50%;">2</span>
<span class="t" style="top:349.30px;font-size:30px;color:#606366;right:2033.20px;font-family:"Liberation Mono", monospace;letter-spacing:0.9px;transform:scaleX(.89);transform-origin:100% 50%;">3</span>
<span class="t" style="top:397.30px;font-size:30px;color:#606366;right:2033.20px;font-family:"Liberation Mono", monospace;letter-spacing:0.9px;transform:scaleX(.89);transform-origin:100% 50%;">4</span>
<span class="t" style="top:445.30px;font-size:30px;color:#606366;right:2033.20px;font-family:"Liberation Mono", monospace;letter-spacing:0.9px;transform:scaleX(.89);transform-origin:100% 50%;">5</span>
<span class="t" style="top:493.30px;font-size:30px;color:#606366;right:2033.20px;font-family:"Liberation Mono", monospace;letter-spacing:0.9px;transform:scaleX(.89);transform-origin:100% 50%;">6</span>
<span class="t" style="top:541.30px;font-size:30px;color:#606366;right:2032.20px;font-family:"Liberation Mono", monospace;letter-spacing:0.9px;transform:scaleX(.89);transform-origin:100% 50%;">7</span>
<span class="t" style="top:589.30px;font-size:30px;color:#606366;right:2033.20px;font-family:"Liberation Mono", monospace;letter-spacing:0.9px;transform:scaleX(.89);transform-origin:100% 50%;">8</span>
<span class="t" style="top:637.30px;font-size:30px;color:#606366;right:2032.20px;font-family:"Liberation Mono", monospace;letter-spacing:0.9px;transform:scaleX(.89);transform-origin:100% 50%;">9</span>
<span class="t" style="top:685.30px;font-size:30px;color:#606366;right:2033.20px;font-family:"Liberation Mono", monospace;letter-spacing:0.9px;transform:scaleX(.89);transform-origin:100% 50%;">10</span>
<span class="t" style="top:733.30px;font-size:30px;color:#606366;right:2033.20px;font-family:"Liberation Mono", monospace;letter-spacing:0.9px;transform:scaleX(.89);transform-origin:100% 50%;">11</span>
<span class="t" style="top:781.30px;font-size:30px;color:#606366;right:2032.20px;font-family:"Liberation Mono", monospace;letter-spacing:0.9px;transform:scaleX(.89);transform-origin:100% 50%;">12</span>
<span class="t" style="top:829.30px;font-size:30px;color:#606366;right:2033.20px;font-family:"Liberation Mono", monospace;letter-spacing:0.9px;transform:scaleX(.89);transform-origin:100% 50%;">13</span>
<span class="t" style="top:877.30px;font-size:30px;color:#606366;right:2033.20px;font-family:"Liberation Mono", monospace;letter-spacing:0.9px;transform:scaleX(.89);transform-origin:100% 50%;">14</span>
<span class="t" style="top:925.30px;font-size:30px;color:#606366;right:2033.20px;font-family:"Liberation Mono", monospace;letter-spacing:0.9px;transform:scaleX(.89);transform-origin:100% 50%;">15</span>
<span class="t" style="top:973.30px;font-size:30px;color:#606366;right:2033.20px;font-family:"Liberation Mono", monospace;letter-spacing:0.9px;transform:scaleX(.89);transform-origin:100% 50%;">16</span>
<span class="t" style="top:1021.30px;font-size:30px;color:#606366;right:2032.20px;font-family:"Liberation Mono", monospace;letter-spacing:0.9px;transform:scaleX(.89);transform-origin:100% 50%;">17</span>
<span class="t" style="top:1069.30px;font-size:30px;color:#606366;right:2033.20px;font-family:"Liberation Mono", monospace;letter-spacing:0.9px;transform:scaleX(.89);transform-origin:100% 50%;">18</span>
<span class="t" style="top:1117.30px;font-size:30px;color:#606366;right:2032.20px;font-family:"Liberation Mono", monospace;letter-spacing:0.9px;transform:scaleX(.89);transform-origin:100% 50%;">19</span>
<span class="t" style="top:1165.30px;font-size:30px;color:#606366;right:2033.20px;font-family:"Liberation Mono", monospace;letter-spacing:0.9px;transform:scaleX(.89);transform-origin:100% 50%;">20</span>
<span class="t" style="top:1213.30px;font-size:30px;color:#606366;right:2033.20px;font-family:"Liberation Mono", monospace;letter-spacing:0.9px;transform:scaleX(.89);transform-origin:100% 50%;">21</span>
<span class="t" style="top:1261.30px;font-size:30px;color:#606366;right:2032.20px;font-family:"Liberation Mono", monospace;letter-spacing:0.9px;transform:scaleX(.89);transform-origin:100% 50%;">22</span>
<span class="t" style="top:1309.30px;font-size:30px;color:#606366;right:2033.20px;font-family:"Liberation Mono", monospace;letter-spacing:0.9px;transform:scaleX(.89);transform-origin:100% 50%;">23</span>
<span class="t" style="top:1357.30px;font-size:30px;color:#606366;right:2033.20px;font-family:"Liberation Mono", monospace;letter-spacing:0.9px;transform:scaleX(.89);transform-origin:100% 50%;">24</span>
<span class="t" style="top:259.65px;font-size:22.5px;color:#bbbbbb;letter-spacing:-0.013px;left:2484.00px;">1028</span>
<span class="t" style="top:1441.65px;font-size:22.5px;color:#bbbbbb;letter-spacing:0.069px;left:213.00px;">Version Control</span>
<span class="t" style="top:1441.65px;font-size:22.5px;color:#bbbbbb;letter-spacing:-1.196px;left:445.00px;">TODO</span>
<span class="t" style="top:1441.65px;font-size:22.5px;color:#bbbbbb;letter-spacing:0.003px;left:579.80px;">Problems</span>
<span class="t" style="top:1441.65px;font-size:22.5px;color:#bbbbbb;letter-spacing:-0.076px;left:756.00px;">Python Packages</span>
<span class="t" style="top:1441.65px;font-size:22.5px;color:#bbbbbb;letter-spacing:0.082px;left:1013.60px;">Python Console</span>
<span class="t" style="top:1441.65px;font-size:22.5px;color:#bbbbbb;letter-spacing:-0.075px;left:1253.00px;">Terminal</span>
<span class="t" style="top:1444.19px;font-size:19.5px;color:#ffffff;left:2483.80px;font-weight:700;">2</span>
<span class="t" style="top:1442.05px;font-size:22.5px;color:#bbbbbb;letter-spacing:-0.089px;left:2509.80px;">Event Log</span>
<span class="t" style="top:1483.85px;font-size:22.5px;color:#bbbbbb;letter-spacing:0.102px;left:174.00px;">Download pre-built shared indexes: Reduce the indexing time and CPU load with pre-built Python packages shared indexes // Always dow... (19 minutes ago)</span>
<span class="t" style="top:1483.85px;font-size:22.5px;color:#bbbbbb;letter-spacing:-1.632px;left:1846.80px;">1:1</span>
<span class="t" style="top:1483.85px;font-size:22.5px;color:#bbbbbb;letter-spacing:-0.813px;left:1897.40px;">LF</span>
<span class="t" style="top:1483.85px;font-size:22.5px;color:#bbbbbb;letter-spacing:0.543px;left:1945.90px;">UTF-8</span>
<span class="t" style="top:1483.85px;font-size:22.5px;color:#bbbbbb;letter-spacing:0.156px;left:2035.50px;">2 spaces</span>
<span class="t" style="top:1483.85px;font-size:22.5px;color:#bbbbbb;letter-spacing:-0.196px;left:2149.40px;">No JSON schema</span>
<span class="t" style="top:1483.85px;font-size:22.5px;color:#bbbbbb;letter-spacing:0.260px;left:2351.90px;">Python 3.9 (airflow_env)</span>
</div><div id="bd"></div>
</body></html>
